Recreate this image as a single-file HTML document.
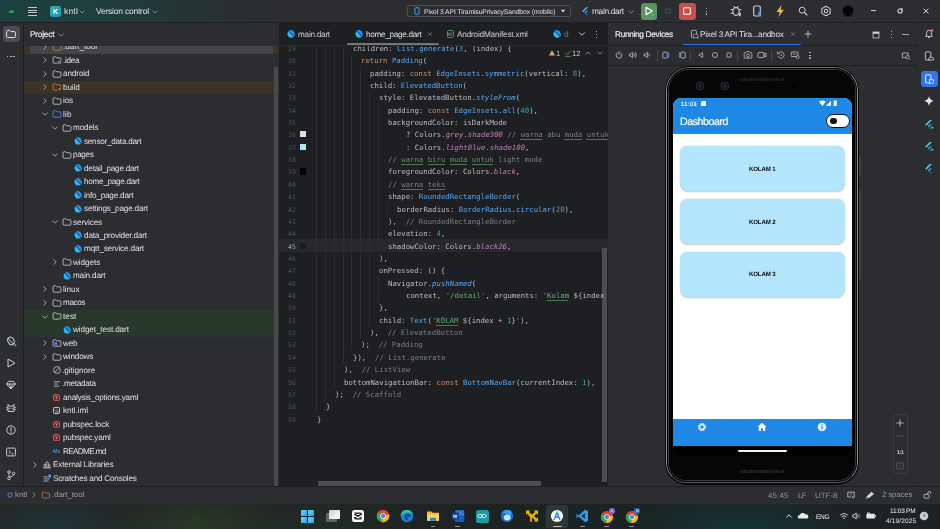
<!DOCTYPE html><html><head><meta charset="utf-8"><title>kntl</title><style>
*{box-sizing:border-box;margin:0;padding:0}
html,body{width:940px;height:529px;overflow:hidden;background:#2b2d30}
body{position:relative;font-family:"Liberation Sans",sans-serif;color:#dfe1e5;font-size:8px}
.abs{position:absolute}
svg{position:absolute;overflow:visible}
.t{position:absolute;white-space:nowrap;line-height:1}
#title{left:0;top:0;width:940px;height:23px;background:linear-gradient(90deg,#1c403e 0px,#1d3f3d 90px,#213a3a 140px,#263334 190px,#2a2f31 235px,#2b2d30 265px)}
#lstrip{left:0;top:22.4px;width:23.6px;height:464px;background:#2b2d30;border-right:1px solid #1e1f22}
#proj{left:23.6px;top:22.4px;width:255.4px;height:464px;background:#2b2d30;overflow:hidden}
#editor{left:279px;top:22.4px;width:329px;height:464px;background:#1e1f22;overflow:hidden}
#rd{left:608px;top:22.4px;width:309.4px;height:464px;background:#2b2d30;overflow:hidden}
#rstrip{left:917.2px;top:22.4px;width:22.8px;height:464px;background:#2b2d30;border-left:1px solid #25272a}
#status{left:0;top:486.2px;width:940px;height:16.6px;background:#2b2d30;border-top:1px solid #1e1f22}
#task{left:0;top:502.6px;width:940px;height:26.4px;background:radial-gradient(ellipse 75px 30px at 55px 24px,rgba(28,60,66,.6),transparent),radial-gradient(ellipse 90px 34px at 200px 24px,rgba(44,68,36,.65),transparent),radial-gradient(ellipse 70px 30px at 330px 26px,rgba(30,52,36,.5),transparent),radial-gradient(ellipse 110px 36px at 740px 26px,rgba(14,64,64,.6),transparent),linear-gradient(90deg,#242827 0,#222726 30%,#1d2322 50%,#1b2325 68%,#1e2226 100%)}
.row{position:absolute;left:0;width:256px;height:13.46px}
.code{position:absolute;left:0;white-space:pre;font-family:"Liberation Mono",monospace;font-size:7.33px;line-height:12.36px;height:12.36px;color:#bcbec4}
.ln{position:absolute;width:30px;text-align:right;font-family:"Liberation Mono",monospace;font-size:7.33px;line-height:12.36px;color:#4b5059;left:-13px}
.cd{font-family:"DejaVu Sans Mono","Liberation Mono",monospace;font-size:7.3px;fill:#bcbec4;white-space:pre}.lnn{font-family:"DejaVu Sans Mono","Liberation Mono",monospace;font-size:6.5px}
.k{fill:#cf8e6d}.c{fill:#56a8f5}.n{fill:#2aacb8}.s{fill:#6aab73}.m{fill:#7a7e85}.p{fill:#c77dbb;font-style:italic}.f{fill:#56a8f5;font-style:italic}

</style></head><body><div id="root" style="position:absolute;left:0;top:0;width:940px;height:529px;will-change:transform;overflow:hidden">
<div id="title" class="abs"></div>
<div class="abs" style="left:8.8px;top:10.4px;width:5px;height:2.4px;background:#2a9d4f;border-radius:2.5px 2.5px 0 0"></div>
<div class="abs" style="left:28.2px;top:7.00px;width:9.2px;height:1px;background:#c3c6cc"></div>
<div class="abs" style="left:28.2px;top:9.55px;width:9.2px;height:1px;background:#c3c6cc"></div>
<div class="abs" style="left:28.2px;top:12.10px;width:9.2px;height:1px;background:#c3c6cc"></div>
<div class="abs" style="left:28.2px;top:14.65px;width:9.2px;height:1px;background:#c3c6cc"></div>
<div class="abs" style="left:49.6px;top:5.6px;width:11px;height:11.2px;border-radius:2.4px;background:linear-gradient(135deg,#2fb5a5,#2a8dc6)"></div>
<svg style="left:52.70px;top:13.83px" width="1" height="1"><text transform="rotate(0.03)" font-size="7.2" font-weight="bold" fill="#fff" style="">K</text></svg>
<svg style="left:64.20px;top:14.45px" width="1" height="1"><text transform="rotate(0.03)" font-size="8.4" fill="#dfe1e5" style="letter-spacing:0.243px;">kntl</text></svg>
<svg style="left:82.30px;top:11.90px" width="1" height="1"><path d="M-2.2 -1.1 L0 1.1 L2.2 -1.1" transform="scale(1.0)" fill="none" stroke="#9da0a8" stroke-width="0.8" stroke-linecap="round" stroke-linejoin="round"/></svg>
<svg style="left:95.50px;top:14.45px" width="1" height="1"><text transform="rotate(0.03)" font-size="8.4" fill="#dfe1e5" style="letter-spacing:-0.169px;">Version control</text></svg>
<svg style="left:154.80px;top:11.90px" width="1" height="1"><path d="M-2.2 -1.1 L0 1.1 L2.2 -1.1" transform="scale(1.0)" fill="none" stroke="#9da0a8" stroke-width="0.8" stroke-linecap="round" stroke-linejoin="round"/></svg>
<div class="abs" style="left:407.4px;top:4.6px;width:163.4px;height:12.8px;border:1px solid #4e5157;border-radius:2.4px"></div>
<svg style="left:416.60px;top:11.00px" width="1" height="1"><rect x="-2.1" y="-3.3" width="4.2" height="6.6" rx="0.9" fill="none" stroke="#3ea6e8" stroke-width="1"/></svg>
<svg style="left:423.60px;top:13.62px" width="1" height="1"><text transform="rotate(0.03)" font-size="6.8" fill="#dfe1e5" style="letter-spacing:-0.106px;">Pixel 3 API TiramisuPrivacySandbox (mobile)</text></svg>
<svg style="left:563.20px;top:11.40px" width="1" height="1"><path d="M-2.3 -1.2 L2.3 -1.2 L0 1.5Z" fill="#ced0d6"/></svg>
<svg style="left:584.60px;top:11.00px" width="1" height="1"><path d="M-2.8 0.2 L1.2 -3.8 L3.2 -3.8 L-1.8 1.2 Z" fill="#54c5f8"/><path d="M-0.6 1.8 L1.2 0 L3.2 0 L0.4 2.8 L3.2 4 L1.2 4 Z" fill="#29a3e8"/></svg>
<svg style="left:592.20px;top:14.35px" width="1" height="1"><text transform="rotate(0.03)" font-size="8.4" fill="#dfe1e5" style="letter-spacing:-0.352px;">main.dart</text></svg>
<svg style="left:631.20px;top:11.90px" width="1" height="1"><path d="M-2.2 -1.1 L0 1.1 L2.2 -1.1" transform="scale(1.0)" fill="none" stroke="#9da0a8" stroke-width="0.8" stroke-linecap="round" stroke-linejoin="round"/></svg>
<div class="abs" style="left:640.8px;top:3.2px;width:16.6px;height:16.4px;border-radius:3.2px;background:#57965c"></div>
<svg style="left:649.00px;top:11.30px" width="1" height="1"><g transform="scale(1.12)"><path d="M-2.6 -3.4 L3 0 L-2.6 3.4 Z" fill="none" stroke="#fff" stroke-width="1" stroke-linejoin="round"/><circle cx="3.2" cy="3.2" r="1" fill="#3ddc5f"/></g></svg>
<svg style="left:668.40px;top:11.40px" width="1" height="1"><ellipse rx="2.2" ry="2.8" fill="none" stroke="#4a4d52" stroke-width="0.9"/><path d="M-3.6 -1 H-2.2 M2.2 -1 H3.6 M-3.6 1.4 H-2.2 M2.2 1.4 H3.6 M-1.4 -3.6 L-0.8 -2.6 M1.4 -3.6 L0.8 -2.6" stroke="#4a4d52" stroke-width="0.8"/></svg>
<div class="abs" style="left:679px;top:3.2px;width:16.8px;height:16.4px;border-radius:3.2px;background:#c94f4f"></div>
<svg style="left:687.40px;top:11.40px" width="1" height="1"><rect x="-3.3" y="-3.3" width="6.6" height="6.6" rx="0.9" fill="none" stroke="#fff" stroke-width="1.05"/></svg>
<div class="abs" style="left:705.7px;top:7.60px;width:1.3px;height:1.3px;background:#ced0d6;border-radius:1px"></div>
<div class="abs" style="left:705.7px;top:10.50px;width:1.3px;height:1.3px;background:#ced0d6;border-radius:1px"></div>
<div class="abs" style="left:705.7px;top:13.40px;width:1.3px;height:1.3px;background:#ced0d6;border-radius:1px"></div>
<svg style="left:736.20px;top:11.20px" width="1" height="1"><g transform="scale(1.28)"><ellipse cy="0.4" rx="2.5" ry="3" fill="none" stroke="#ced0d6" stroke-width="0.95"/><path d="M-4.2 -1.2 H-2.5 M2.5 -1.2 H4.2 M-4.2 1.8 H-2.5 M2.5 1.8 H4 M-1.8 -3.8 L-1 -2.6 M1.8 -3.8 L1 -2.6" stroke="#ced0d6" stroke-width="0.85"/><path d="M1.6 1.6 L4.2 3 L2.6 4.4Z" fill="#ced0d6"/></g></svg>
<svg style="left:757.20px;top:11.20px" width="1" height="1"><g transform="scale(1.22)"><rect x="-2.7" y="-4.1" width="5.4" height="8.2" rx="1" fill="none" stroke="#ced0d6" stroke-width="0.95"/><path d="M3.4 0 L1.2 2.2 L3.4 4.4 M3.4 -0.2 L1.6 1.6" fill="none" stroke="#3ea6e8" stroke-width="1.1"/></g></svg>
<svg style="left:780.40px;top:11.20px" width="1" height="1"><g transform="scale(1.35)"><path d="M1.2 -4.6 L-2.6 0.8 L-0.2 0.8 L-1.2 4.6 L2.8 -1 L0.4 -1 Z" fill="#f2c037"/></g></svg>
<svg style="left:803.00px;top:11.00px" width="1" height="1"><circle cx="-0.8" cy="-0.8" r="3" fill="none" stroke="#ced0d6" stroke-width="1"/><path d="M1.4 1.4 L4 4" stroke="#ced0d6" stroke-width="1.1" stroke-linecap="round"/></svg>
<svg style="left:825.60px;top:11.20px" width="1" height="1"><g transform="scale(1.12)"><path d="M0 -4.3 L3.7 -2.15 L3.7 2.15 L0 4.3 L-3.7 2.15 L-3.7 -2.15 Z" fill="none" stroke="#ced0d6" stroke-width="0.95" stroke-linejoin="round"/><circle r="1.5" fill="none" stroke="#ced0d6" stroke-width="0.9"/></g></svg>
<svg style="left:848.40px;top:11.20px" width="1" height="1"><circle r="5.5" fill="#050507"/></svg>
<div class="abs" style="left:871.4px;top:10.4px;width:5px;height:1px;background:#ced0d6"></div>
<svg style="left:899.60px;top:10.80px" width="1" height="1"><circle r="2" fill="none" stroke="#ced0d6" stroke-width="1.1"/><path d="M-0.6 -2.6 H2.4 V0.4" fill="none" stroke="#ced0d6" stroke-width="0.7"/></svg>
<svg style="left:926.00px;top:10.80px" width="1" height="1"><path d="M-2.4 -2.4 L2.4 2.4 M2.4 -2.4 L-2.4 2.4" stroke="#ced0d6" stroke-width="1"/></svg>
<div id="lstrip" class="abs"></div>
<div class="abs" style="left:3px;top:25.6px;width:16.8px;height:16.8px;border-radius:3.4px;background:#4a4c51"></div>
<svg style="left:11.40px;top:34.00px" width="1" height="1"><path d="M-4.4 -2.4 Q-4.4 -3.6 -3.2 -3.6 L-1.4 -3.6 L-0.2 -2.4 L3.2 -2.4 Q4.4 -2.4 4.4 -1.2 L4.4 2.4 Q4.4 3.6 3.2 3.6 L-3.2 3.6 Q-4.4 3.6 -4.4 2.4 Z" fill="none" stroke="#e3e5e9" stroke-width="1"/></svg>
<div class="abs" style="left:6.60px;top:55.6px;width:1.8px;height:1.8px;background:#ced0d6;border-radius:1px"></div>
<div class="abs" style="left:10.00px;top:55.6px;width:1.8px;height:1.8px;background:#ced0d6;border-radius:1px"></div>
<div class="abs" style="left:13.40px;top:55.6px;width:1.8px;height:1.8px;background:#ced0d6;border-radius:1px"></div>
<svg style="left:11.20px;top:341.00px" width="1" height="1"><ellipse rx="3" ry="4" transform="rotate(-28)" fill="none" stroke="#ced0d6" stroke-width="1"/><path d="M-3 -2.6 L2.6 3.4" stroke="#ced0d6" stroke-width="1"/><circle cx="4.4" cy="4.2" r="1" fill="#3ddc5f"/></svg>
<svg style="left:11.40px;top:363.00px" width="1" height="1"><path d="M-3 -4 L3.8 0 L-3 4 Z" fill="none" stroke="#ced0d6" stroke-width="1" stroke-linejoin="round"/></svg>
<svg style="left:11.40px;top:385.20px" width="1" height="1"><path d="M-4.6 -1 L-2.4 -3.6 L2.4 -3.6 L4.6 -1 L0 4 Z M-4.6 -1 H4.6 M-1.6 -1 L0 3.6 L1.6 -1" fill="none" stroke="#ced0d6" stroke-width="0.95" stroke-linejoin="round"/></svg>
<svg style="left:11.40px;top:407.80px" width="1" height="1"><path d="M-3 -3.6 L-1.6 -1.8 H1.6 L3 -3.6 V3.4 H-3 Z" fill="none" stroke="#ced0d6" stroke-width="1" stroke-linejoin="round"/><path d="M-5 -0.4 H-3 M-5 1.4 H-3 M3 -0.4 H5 M3 1.4 H5" stroke="#ced0d6" stroke-width="0.7"/><circle cx="-1.2" cy="0.4" r="0.6" fill="#ced0d6"/><circle cx="1.2" cy="0.4" r="0.6" fill="#ced0d6"/></svg>
<svg style="left:11.40px;top:430.00px" width="1" height="1"><circle r="4.2" fill="none" stroke="#ced0d6" stroke-width="1"/><path d="M0 -2.2 V0.6" stroke="#ced0d6" stroke-width="1.1" stroke-linecap="round"/><circle cy="2.2" r="0.65" fill="#ced0d6"/></svg>
<svg style="left:11.40px;top:452.40px" width="1" height="1"><rect x="-4.4" y="-3.9" width="8.8" height="7.8" rx="1.1" fill="none" stroke="#ced0d6" stroke-width="1"/><path d="M-2.2 -1.6 L-0.4 0 L-2.2 1.6 M0.4 1.8 H2.4" fill="none" stroke="#ced0d6" stroke-width="0.9"/></svg>
<svg style="left:11.40px;top:474.60px" width="1" height="1"><circle cx="-2" cy="-3" r="1.3" fill="none" stroke="#ced0d6" stroke-width="0.9"/><circle cx="-2" cy="3.4" r="1.3" fill="none" stroke="#ced0d6" stroke-width="0.9"/><circle cx="2.6" cy="-1.6" r="1.3" fill="none" stroke="#ced0d6" stroke-width="0.9"/><path d="M-2 -1.7 V2.1 M2.6 -0.3 Q2.4 1.6 -1.6 2.2" fill="none" stroke="#ced0d6" stroke-width="0.9"/></svg>
<div id="proj" class="abs">
<div class="abs" style="left:0;top:23.30px;width:256px;height:7.86px;background:#3d3223"></div>
<div class="abs" style="left:6.6px;top:23.30px;width:242.4px;height:7.86px;background:#43454a"></div>
<div class="abs" style="left:0;top:58.11px;width:256px;height:13.475px;background:#3d3223"></div>
<div class="abs" style="left:0;top:287.19px;width:256px;height:13.475px;background:#29382b"></div>
<div class="abs" style="left:0;top:300.66px;width:256px;height:13.475px;background:#29382b"></div>
</div>
<div class="abs" style="left:0;top:45.6px;width:273px;height:441px;overflow:hidden"><div class="abs" style="left:0;top:-45.6px">
<svg style="left:44.80px;top:46.82px" width="1" height="1"><path d="M-1.1 -2.2 L1.1 0 L-1.1 2.2" transform="scale(1.08)" fill="none" stroke="#a8abb2" stroke-width="0.85" stroke-linecap="round" stroke-linejoin="round"/></svg>
<svg style="left:57.20px;top:46.82px" width="1" height="1"><g transform="scale(1.07)"><path d="M-3.7 -2 Q-3.7 -3 -2.7 -3 L-1.2 -3 L-0.2 -2 L2.7 -2 Q3.7 -2 3.7 -1 L3.7 2 Q3.7 3 2.7 3 L-2.7 3 Q-3.7 3 -3.7 2 Z" fill="none" stroke="#c77d55" stroke-width="0.8"/></g></svg>
<svg style="left:62.60px;top:49.32px" width="1" height="1"><text transform="rotate(0.03)" font-size="8.2" fill="#dfe1e5" style="">.dart_tool</text></svg>
<svg style="left:44.80px;top:60.30px" width="1" height="1"><path d="M-1.1 -2.2 L1.1 0 L-1.1 2.2" transform="scale(1.08)" fill="none" stroke="#a8abb2" stroke-width="0.85" stroke-linecap="round" stroke-linejoin="round"/></svg>
<svg style="left:57.20px;top:60.30px" width="1" height="1"><g transform="scale(1.07)"><path d="M-3.7 -2 Q-3.7 -3 -2.7 -3 L-1.2 -3 L-0.2 -2 L2.7 -2 Q3.7 -2 3.7 -1 L3.7 2 Q3.7 3 2.7 3 L-2.7 3 Q-3.7 3 -3.7 2 Z" fill="none" stroke="#c6c8ce" stroke-width="0.8"/></g></svg>
<svg style="left:57.20px;top:60.30px" width="1" height="1"><rect x="0.6" y="0.2" width="4" height="3.6" fill="#2b2d30"/><path d="M1.4 1 H3.6 V3.2 H1.4Z" fill="none" stroke="#c6c8ce" stroke-width="0.6"/></svg>
<svg style="left:62.60px;top:62.80px" width="1" height="1"><text transform="rotate(0.03)" font-size="8.2" fill="#dfe1e5" style="letter-spacing:-0.295px;">.idea</text></svg>
<svg style="left:44.80px;top:73.77px" width="1" height="1"><path d="M-1.1 -2.2 L1.1 0 L-1.1 2.2" transform="scale(1.08)" fill="none" stroke="#a8abb2" stroke-width="0.85" stroke-linecap="round" stroke-linejoin="round"/></svg>
<svg style="left:57.20px;top:73.77px" width="1" height="1"><g transform="scale(1.07)"><path d="M-3.7 -2 Q-3.7 -3 -2.7 -3 L-1.2 -3 L-0.2 -2 L2.7 -2 Q3.7 -2 3.7 -1 L3.7 2 Q3.7 3 2.7 3 L-2.7 3 Q-3.7 3 -3.7 2 Z" fill="none" stroke="#c6c8ce" stroke-width="0.8"/></g></svg>
<svg style="left:62.60px;top:76.27px" width="1" height="1"><text transform="rotate(0.03)" font-size="8.2" fill="#dfe1e5" style="letter-spacing:-0.126px;">android</text></svg>
<svg style="left:44.80px;top:87.25px" width="1" height="1"><path d="M-1.1 -2.2 L1.1 0 L-1.1 2.2" transform="scale(1.08)" fill="none" stroke="#a8abb2" stroke-width="0.85" stroke-linecap="round" stroke-linejoin="round"/></svg>
<svg style="left:57.20px;top:87.25px" width="1" height="1"><g transform="scale(1.07)"><path d="M-3.7 -2 Q-3.7 -3 -2.7 -3 L-1.2 -3 L-0.2 -2 L2.7 -2 Q3.7 -2 3.7 -1 L3.7 2 Q3.7 3 2.7 3 L-2.7 3 Q-3.7 3 -3.7 2 Z" fill="none" stroke="#c77d55" stroke-width="0.8"/></g></svg>
<svg style="left:57.20px;top:87.25px" width="1" height="1"><rect x="0.6" y="0.2" width="4" height="3.6" fill="#3d3223"/><circle cx="2.6" cy="2" r="1.1" fill="#c77d55"/></svg>
<svg style="left:62.60px;top:89.75px" width="1" height="1"><text transform="rotate(0.03)" font-size="8.2" fill="#dfe1e5" style="letter-spacing:-0.131px;">build</text></svg>
<svg style="left:44.80px;top:100.72px" width="1" height="1"><path d="M-1.1 -2.2 L1.1 0 L-1.1 2.2" transform="scale(1.08)" fill="none" stroke="#a8abb2" stroke-width="0.85" stroke-linecap="round" stroke-linejoin="round"/></svg>
<svg style="left:57.20px;top:100.72px" width="1" height="1"><g transform="scale(1.07)"><path d="M-3.7 -2 Q-3.7 -3 -2.7 -3 L-1.2 -3 L-0.2 -2 L2.7 -2 Q3.7 -2 3.7 -1 L3.7 2 Q3.7 3 2.7 3 L-2.7 3 Q-3.7 3 -3.7 2 Z" fill="none" stroke="#c6c8ce" stroke-width="0.8"/></g></svg>
<svg style="left:62.60px;top:103.22px" width="1" height="1"><text transform="rotate(0.03)" font-size="8.2" fill="#dfe1e5" style="letter-spacing:-0.141px;">ios</text></svg>
<svg style="left:44.80px;top:114.40px" width="1" height="1"><path d="M-2.2 -1.1 L0 1.1 L2.2 -1.1" transform="scale(1.08)" fill="none" stroke="#a8abb2" stroke-width="0.85" stroke-linecap="round" stroke-linejoin="round"/></svg>
<svg style="left:57.20px;top:114.20px" width="1" height="1"><g transform="scale(1.07)"><path d="M-3.7 -2 Q-3.7 -3 -2.7 -3 L-1.2 -3 L-0.2 -2 L2.7 -2 Q3.7 -2 3.7 -1 L3.7 2 Q3.7 3 2.7 3 L-2.7 3 Q-3.7 3 -3.7 2 Z" fill="none" stroke="#548af7" stroke-width="0.8"/></g></svg>
<svg style="left:62.60px;top:116.70px" width="1" height="1"><text transform="rotate(0.03)" font-size="8.2" fill="#dfe1e5" style="letter-spacing:0.198px;">lib</text></svg>
<svg style="left:54.60px;top:127.88px" width="1" height="1"><path d="M-2.2 -1.1 L0 1.1 L2.2 -1.1" transform="scale(1.08)" fill="none" stroke="#a8abb2" stroke-width="0.85" stroke-linecap="round" stroke-linejoin="round"/></svg>
<svg style="left:67.00px;top:127.67px" width="1" height="1"><g transform="scale(1.07)"><path d="M-3.7 -2 Q-3.7 -3 -2.7 -3 L-1.2 -3 L-0.2 -2 L2.7 -2 Q3.7 -2 3.7 -1 L3.7 2 Q3.7 3 2.7 3 L-2.7 3 Q-3.7 3 -3.7 2 Z" fill="none" stroke="#c6c8ce" stroke-width="0.8"/></g></svg>
<svg style="left:73.00px;top:130.17px" width="1" height="1"><text transform="rotate(0.03)" font-size="8.2" fill="#dfe1e5" style="letter-spacing:-0.167px;">models</text></svg>
<svg style="left:77.90px;top:141.15px" width="1" height="1"><g transform="scale(0.973)"><path d="M-1.2 -3.7 Q0.8 -4 2.4 -2.6 Q3.9 -1 3.6 1.2 Q3.2 3 1.2 3.6 Q-0.8 4 -2.4 2.8 Q-3.9 1.2 -3.5 -1 Q-3 -3 -1.2 -3.7Z" fill="#2db8f6"/><path d="M-1.6 -3.5 Q0.8 -4.1 2.5 -2.6 Q3.9 -1 3.6 1.2 Q3.5 1.8 3.2 2.3 Z" fill="#2b8fe1"/><path d="M-2 -2.9 L2.5 1.9" stroke="#0f4f9f" stroke-width="1.15" stroke-linecap="round"/></g></svg>
<svg style="left:84.30px;top:143.65px" width="1" height="1"><text transform="rotate(0.03)" font-size="8.2" fill="#dfe1e5" style="letter-spacing:-0.263px;">sensor_data.dart</text></svg>
<svg style="left:54.60px;top:154.82px" width="1" height="1"><path d="M-2.2 -1.1 L0 1.1 L2.2 -1.1" transform="scale(1.08)" fill="none" stroke="#a8abb2" stroke-width="0.85" stroke-linecap="round" stroke-linejoin="round"/></svg>
<svg style="left:67.00px;top:154.62px" width="1" height="1"><g transform="scale(1.07)"><path d="M-3.7 -2 Q-3.7 -3 -2.7 -3 L-1.2 -3 L-0.2 -2 L2.7 -2 Q3.7 -2 3.7 -1 L3.7 2 Q3.7 3 2.7 3 L-2.7 3 Q-3.7 3 -3.7 2 Z" fill="none" stroke="#c6c8ce" stroke-width="0.8"/></g></svg>
<svg style="left:73.00px;top:157.12px" width="1" height="1"><text transform="rotate(0.03)" font-size="8.2" fill="#dfe1e5" style="letter-spacing:-0.386px;">pages</text></svg>
<svg style="left:77.90px;top:168.10px" width="1" height="1"><g transform="scale(0.973)"><path d="M-1.2 -3.7 Q0.8 -4 2.4 -2.6 Q3.9 -1 3.6 1.2 Q3.2 3 1.2 3.6 Q-0.8 4 -2.4 2.8 Q-3.9 1.2 -3.5 -1 Q-3 -3 -1.2 -3.7Z" fill="#2db8f6"/><path d="M-1.6 -3.5 Q0.8 -4.1 2.5 -2.6 Q3.9 -1 3.6 1.2 Q3.5 1.8 3.2 2.3 Z" fill="#2b8fe1"/><path d="M-2 -2.9 L2.5 1.9" stroke="#0f4f9f" stroke-width="1.15" stroke-linecap="round"/></g></svg>
<svg style="left:84.30px;top:170.60px" width="1" height="1"><text transform="rotate(0.03)" font-size="8.2" fill="#dfe1e5" style="letter-spacing:-0.241px;">detail_page.dart</text></svg>
<svg style="left:77.90px;top:181.57px" width="1" height="1"><g transform="scale(0.973)"><path d="M-1.2 -3.7 Q0.8 -4 2.4 -2.6 Q3.9 -1 3.6 1.2 Q3.2 3 1.2 3.6 Q-0.8 4 -2.4 2.8 Q-3.9 1.2 -3.5 -1 Q-3 -3 -1.2 -3.7Z" fill="#2db8f6"/><path d="M-1.6 -3.5 Q0.8 -4.1 2.5 -2.6 Q3.9 -1 3.6 1.2 Q3.5 1.8 3.2 2.3 Z" fill="#2b8fe1"/><path d="M-2 -2.9 L2.5 1.9" stroke="#0f4f9f" stroke-width="1.15" stroke-linecap="round"/></g></svg>
<svg style="left:84.30px;top:184.07px" width="1" height="1"><text transform="rotate(0.03)" font-size="8.2" fill="#dfe1e5" style="letter-spacing:-0.302px;">home_page.dart</text></svg>
<svg style="left:77.90px;top:195.05px" width="1" height="1"><g transform="scale(0.973)"><path d="M-1.2 -3.7 Q0.8 -4 2.4 -2.6 Q3.9 -1 3.6 1.2 Q3.2 3 1.2 3.6 Q-0.8 4 -2.4 2.8 Q-3.9 1.2 -3.5 -1 Q-3 -3 -1.2 -3.7Z" fill="#2db8f6"/><path d="M-1.6 -3.5 Q0.8 -4.1 2.5 -2.6 Q3.9 -1 3.6 1.2 Q3.5 1.8 3.2 2.3 Z" fill="#2b8fe1"/><path d="M-2 -2.9 L2.5 1.9" stroke="#0f4f9f" stroke-width="1.15" stroke-linecap="round"/></g></svg>
<svg style="left:84.30px;top:197.55px" width="1" height="1"><text transform="rotate(0.03)" font-size="8.2" fill="#dfe1e5" style="letter-spacing:-0.218px;">info_page.dart</text></svg>
<svg style="left:77.90px;top:208.52px" width="1" height="1"><g transform="scale(0.973)"><path d="M-1.2 -3.7 Q0.8 -4 2.4 -2.6 Q3.9 -1 3.6 1.2 Q3.2 3 1.2 3.6 Q-0.8 4 -2.4 2.8 Q-3.9 1.2 -3.5 -1 Q-3 -3 -1.2 -3.7Z" fill="#2db8f6"/><path d="M-1.6 -3.5 Q0.8 -4.1 2.5 -2.6 Q3.9 -1 3.6 1.2 Q3.5 1.8 3.2 2.3 Z" fill="#2b8fe1"/><path d="M-2 -2.9 L2.5 1.9" stroke="#0f4f9f" stroke-width="1.15" stroke-linecap="round"/></g></svg>
<svg style="left:84.30px;top:211.02px" width="1" height="1"><text transform="rotate(0.03)" font-size="8.2" fill="#dfe1e5" style="letter-spacing:-0.192px;">settings_page.dart</text></svg>
<svg style="left:54.60px;top:222.20px" width="1" height="1"><path d="M-2.2 -1.1 L0 1.1 L2.2 -1.1" transform="scale(1.08)" fill="none" stroke="#a8abb2" stroke-width="0.85" stroke-linecap="round" stroke-linejoin="round"/></svg>
<svg style="left:67.00px;top:222.00px" width="1" height="1"><g transform="scale(1.07)"><path d="M-3.7 -2 Q-3.7 -3 -2.7 -3 L-1.2 -3 L-0.2 -2 L2.7 -2 Q3.7 -2 3.7 -1 L3.7 2 Q3.7 3 2.7 3 L-2.7 3 Q-3.7 3 -3.7 2 Z" fill="none" stroke="#c6c8ce" stroke-width="0.8"/></g></svg>
<svg style="left:73.00px;top:224.50px" width="1" height="1"><text transform="rotate(0.03)" font-size="8.2" fill="#dfe1e5" style="letter-spacing:-0.125px;">services</text></svg>
<svg style="left:77.90px;top:235.47px" width="1" height="1"><g transform="scale(0.973)"><path d="M-1.2 -3.7 Q0.8 -4 2.4 -2.6 Q3.9 -1 3.6 1.2 Q3.2 3 1.2 3.6 Q-0.8 4 -2.4 2.8 Q-3.9 1.2 -3.5 -1 Q-3 -3 -1.2 -3.7Z" fill="#2db8f6"/><path d="M-1.6 -3.5 Q0.8 -4.1 2.5 -2.6 Q3.9 -1 3.6 1.2 Q3.5 1.8 3.2 2.3 Z" fill="#2b8fe1"/><path d="M-2 -2.9 L2.5 1.9" stroke="#0f4f9f" stroke-width="1.15" stroke-linecap="round"/></g></svg>
<svg style="left:84.30px;top:237.97px" width="1" height="1"><text transform="rotate(0.03)" font-size="8.2" fill="#dfe1e5" style="letter-spacing:-0.171px;">data_provider.dart</text></svg>
<svg style="left:77.90px;top:248.95px" width="1" height="1"><g transform="scale(0.973)"><path d="M-1.2 -3.7 Q0.8 -4 2.4 -2.6 Q3.9 -1 3.6 1.2 Q3.2 3 1.2 3.6 Q-0.8 4 -2.4 2.8 Q-3.9 1.2 -3.5 -1 Q-3 -3 -1.2 -3.7Z" fill="#2db8f6"/><path d="M-1.6 -3.5 Q0.8 -4.1 2.5 -2.6 Q3.9 -1 3.6 1.2 Q3.5 1.8 3.2 2.3 Z" fill="#2b8fe1"/><path d="M-2 -2.9 L2.5 1.9" stroke="#0f4f9f" stroke-width="1.15" stroke-linecap="round"/></g></svg>
<svg style="left:84.30px;top:251.45px" width="1" height="1"><text transform="rotate(0.03)" font-size="8.2" fill="#dfe1e5" style="letter-spacing:-0.168px;">mqtt_service.dart</text></svg>
<svg style="left:54.60px;top:262.43px" width="1" height="1"><path d="M-1.1 -2.2 L1.1 0 L-1.1 2.2" transform="scale(1.08)" fill="none" stroke="#a8abb2" stroke-width="0.85" stroke-linecap="round" stroke-linejoin="round"/></svg>
<svg style="left:67.00px;top:262.43px" width="1" height="1"><g transform="scale(1.07)"><path d="M-3.7 -2 Q-3.7 -3 -2.7 -3 L-1.2 -3 L-0.2 -2 L2.7 -2 Q3.7 -2 3.7 -1 L3.7 2 Q3.7 3 2.7 3 L-2.7 3 Q-3.7 3 -3.7 2 Z" fill="none" stroke="#c6c8ce" stroke-width="0.8"/></g></svg>
<svg style="left:73.00px;top:264.92px" width="1" height="1"><text transform="rotate(0.03)" font-size="8.2" fill="#dfe1e5" style="letter-spacing:-0.067px;">widgets</text></svg>
<svg style="left:66.90px;top:275.90px" width="1" height="1"><g transform="scale(0.973)"><path d="M-1.2 -3.7 Q0.8 -4 2.4 -2.6 Q3.9 -1 3.6 1.2 Q3.2 3 1.2 3.6 Q-0.8 4 -2.4 2.8 Q-3.9 1.2 -3.5 -1 Q-3 -3 -1.2 -3.7Z" fill="#2db8f6"/><path d="M-1.6 -3.5 Q0.8 -4.1 2.5 -2.6 Q3.9 -1 3.6 1.2 Q3.5 1.8 3.2 2.3 Z" fill="#2b8fe1"/><path d="M-2 -2.9 L2.5 1.9" stroke="#0f4f9f" stroke-width="1.15" stroke-linecap="round"/></g></svg>
<svg style="left:73.30px;top:278.40px" width="1" height="1"><text transform="rotate(0.03)" font-size="8.2" fill="#dfe1e5" style="letter-spacing:-0.198px;">main.dart</text></svg>
<svg style="left:44.80px;top:289.38px" width="1" height="1"><path d="M-1.1 -2.2 L1.1 0 L-1.1 2.2" transform="scale(1.08)" fill="none" stroke="#a8abb2" stroke-width="0.85" stroke-linecap="round" stroke-linejoin="round"/></svg>
<svg style="left:57.20px;top:289.38px" width="1" height="1"><g transform="scale(1.07)"><path d="M-3.7 -2 Q-3.7 -3 -2.7 -3 L-1.2 -3 L-0.2 -2 L2.7 -2 Q3.7 -2 3.7 -1 L3.7 2 Q3.7 3 2.7 3 L-2.7 3 Q-3.7 3 -3.7 2 Z" fill="none" stroke="#c6c8ce" stroke-width="0.8"/></g></svg>
<svg style="left:62.60px;top:291.87px" width="1" height="1"><text transform="rotate(0.03)" font-size="8.2" fill="#dfe1e5" style="letter-spacing:-0.066px;">linux</text></svg>
<svg style="left:44.80px;top:302.85px" width="1" height="1"><path d="M-1.1 -2.2 L1.1 0 L-1.1 2.2" transform="scale(1.08)" fill="none" stroke="#a8abb2" stroke-width="0.85" stroke-linecap="round" stroke-linejoin="round"/></svg>
<svg style="left:57.20px;top:302.85px" width="1" height="1"><g transform="scale(1.07)"><path d="M-3.7 -2 Q-3.7 -3 -2.7 -3 L-1.2 -3 L-0.2 -2 L2.7 -2 Q3.7 -2 3.7 -1 L3.7 2 Q3.7 3 2.7 3 L-2.7 3 Q-3.7 3 -3.7 2 Z" fill="none" stroke="#c6c8ce" stroke-width="0.8"/></g></svg>
<svg style="left:62.60px;top:305.35px" width="1" height="1"><text transform="rotate(0.03)" font-size="8.2" fill="#dfe1e5" style="letter-spacing:-0.438px;">macos</text></svg>
<svg style="left:44.80px;top:316.52px" width="1" height="1"><path d="M-2.2 -1.1 L0 1.1 L2.2 -1.1" transform="scale(1.08)" fill="none" stroke="#a8abb2" stroke-width="0.85" stroke-linecap="round" stroke-linejoin="round"/></svg>
<svg style="left:57.20px;top:316.32px" width="1" height="1"><g transform="scale(1.07)"><path d="M-3.7 -2 Q-3.7 -3 -2.7 -3 L-1.2 -3 L-0.2 -2 L2.7 -2 Q3.7 -2 3.7 -1 L3.7 2 Q3.7 3 2.7 3 L-2.7 3 Q-3.7 3 -3.7 2 Z" fill="none" stroke="#c6c8ce" stroke-width="0.8"/></g></svg>
<svg style="left:57.20px;top:316.32px" width="1" height="1"><circle cx="2.8" cy="2.4" r="1.5" fill="#29382b"/><circle cx="2.1" cy="2.5" r="0.9" fill="#db5c5c"/><circle cx="3.5" cy="2.5" r="0.9" fill="#57965c"/></svg>
<svg style="left:62.60px;top:318.82px" width="1" height="1"><text transform="rotate(0.03)" font-size="8.2" fill="#dfe1e5" style="letter-spacing:0.061px;">test</text></svg>
<svg style="left:66.90px;top:329.80px" width="1" height="1"><g transform="scale(0.973)"><path d="M-1.2 -3.7 Q0.8 -4 2.4 -2.6 Q3.9 -1 3.6 1.2 Q3.2 3 1.2 3.6 Q-0.8 4 -2.4 2.8 Q-3.9 1.2 -3.5 -1 Q-3 -3 -1.2 -3.7Z" fill="#2db8f6"/><path d="M-1.6 -3.5 Q0.8 -4.1 2.5 -2.6 Q3.9 -1 3.6 1.2 Q3.5 1.8 3.2 2.3 Z" fill="#2b8fe1"/><path d="M-2 -2.9 L2.5 1.9" stroke="#0f4f9f" stroke-width="1.15" stroke-linecap="round"/></g></svg>
<svg style="left:73.30px;top:332.30px" width="1" height="1"><text transform="rotate(0.03)" font-size="8.2" fill="#dfe1e5" style="letter-spacing:-0.126px;">widget_test.dart</text></svg>
<svg style="left:44.80px;top:343.27px" width="1" height="1"><path d="M-1.1 -2.2 L1.1 0 L-1.1 2.2" transform="scale(1.08)" fill="none" stroke="#a8abb2" stroke-width="0.85" stroke-linecap="round" stroke-linejoin="round"/></svg>
<svg style="left:57.20px;top:343.27px" width="1" height="1"><g transform="scale(1.07)"><path d="M-3.7 -2 Q-3.7 -3 -2.7 -3 L-1.2 -3 L-0.2 -2 L2.7 -2 Q3.7 -2 3.7 -1 L3.7 2 Q3.7 3 2.7 3 L-2.7 3 Q-3.7 3 -3.7 2 Z" fill="none" stroke="#c6c8ce" stroke-width="0.8"/></g></svg>
<svg style="left:57.20px;top:343.27px" width="1" height="1"><rect x="-2.4" y="-0.8" width="2.6" height="2.6" fill="#548af7"/></svg>
<svg style="left:62.60px;top:345.77px" width="1" height="1"><text transform="rotate(0.03)" font-size="8.2" fill="#dfe1e5" style="letter-spacing:-0.222px;">web</text></svg>
<svg style="left:44.80px;top:356.75px" width="1" height="1"><path d="M-1.1 -2.2 L1.1 0 L-1.1 2.2" transform="scale(1.08)" fill="none" stroke="#a8abb2" stroke-width="0.85" stroke-linecap="round" stroke-linejoin="round"/></svg>
<svg style="left:57.20px;top:356.75px" width="1" height="1"><g transform="scale(1.07)"><path d="M-3.7 -2 Q-3.7 -3 -2.7 -3 L-1.2 -3 L-0.2 -2 L2.7 -2 Q3.7 -2 3.7 -1 L3.7 2 Q3.7 3 2.7 3 L-2.7 3 Q-3.7 3 -3.7 2 Z" fill="none" stroke="#c6c8ce" stroke-width="0.8"/></g></svg>
<svg style="left:62.60px;top:359.25px" width="1" height="1"><text transform="rotate(0.03)" font-size="8.2" fill="#dfe1e5" style="letter-spacing:-0.175px;">windows</text></svg>
<svg style="left:56.80px;top:370.23px" width="1" height="1"><circle r="3.4" fill="none" stroke="#c6c8ce" stroke-width="0.8"/><path d="M-2.3 2.3 L2.3 -2.3" stroke="#c6c8ce" stroke-width="0.8"/></svg>
<svg style="left:62.30px;top:372.72px" width="1" height="1"><text transform="rotate(0.03)" font-size="8.2" fill="#dfe1e5" style="letter-spacing:-0.037px;">.gitignore</text></svg>
<svg style="left:56.80px;top:383.70px" width="1" height="1"><path d="M-3.2 -2.2 H3.2 M-3.2 0 H1 M-3.2 2.2 H2.2" stroke="#c6c8ce" stroke-width="0.8"/></svg>
<svg style="left:62.30px;top:386.20px" width="1" height="1"><text transform="rotate(0.03)" font-size="8.2" fill="#dfe1e5" style="letter-spacing:-0.309px;">.metadata</text></svg>
<div class="abs" style="left:53.4px;top:393.68px;width:6.8px;height:7px;border-radius:1.5px;background:#6e2d30;border:0.7px solid #c75450"></div>
<svg style="left:55.30px;top:398.89px" width="1" height="1"><text transform="rotate(0.03)" font-size="4.6" font-weight="bold" fill="#e39d99" style="">Y</text></svg>
<svg style="left:62.90px;top:399.67px" width="1" height="1"><text transform="rotate(0.03)" font-size="8.2" fill="#dfe1e5" style="letter-spacing:-0.241px;">analysis_options.yaml</text></svg>
<div class="abs" style="left:53.4px;top:407.25px;width:7px;height:6.8px;border-radius:1.4px;border:0.75px solid #c6c8ce;background:#36383c"></div>
<svg style="left:56.90px;top:410.65px" width="1" height="1"><path d="M-1.8 -0.6 H0.2 M-1.8 1 H1.8" stroke="#c6c8ce" stroke-width="0.6"/></svg>
<svg style="left:62.90px;top:413.15px" width="1" height="1"><text transform="rotate(0.03)" font-size="8.2" fill="#dfe1e5" style="letter-spacing:-0.073px;">kntl.iml</text></svg>
<div class="abs" style="left:53.4px;top:420.62px;width:6.8px;height:7px;border-radius:1.5px;background:#6e2d30;border:0.7px solid #c75450"></div>
<svg style="left:55.30px;top:425.84px" width="1" height="1"><text transform="rotate(0.03)" font-size="4.6" font-weight="bold" fill="#e39d99" style="">Y</text></svg>
<svg style="left:62.90px;top:426.62px" width="1" height="1"><text transform="rotate(0.03)" font-size="8.2" fill="#dfe1e5" style="letter-spacing:-0.133px;">pubspec.lock</text></svg>
<div class="abs" style="left:53.4px;top:434.10px;width:6.8px;height:7px;border-radius:1.5px;background:#6e2d30;border:0.7px solid #c75450"></div>
<svg style="left:55.30px;top:439.32px" width="1" height="1"><text transform="rotate(0.03)" font-size="4.6" font-weight="bold" fill="#e39d99" style="">Y</text></svg>
<svg style="left:62.90px;top:440.10px" width="1" height="1"><text transform="rotate(0.03)" font-size="8.2" fill="#dfe1e5" style="letter-spacing:-0.236px;">pubspec.yaml</text></svg>
<svg style="left:52.60px;top:453.15px" width="1" height="1"><text transform="rotate(0.03)" font-size="5.6" font-weight="bold" fill="#548af7" style="">M</text></svg>
<svg style="left:59.00px;top:451.07px" width="1" height="1"><path d="M0 -1.6 V1.6 M-1.1 0.5 L0 1.7 L1.1 0.5" fill="none" stroke="#548af7" stroke-width="0.7"/></svg>
<svg style="left:62.90px;top:453.57px" width="1" height="1"><text transform="rotate(0.03)" font-size="8.2" fill="#dfe1e5" style="letter-spacing:-0.669px;">README.md</text></svg>
<svg style="left:34.80px;top:464.55px" width="1" height="1"><path d="M-1.1 -2.2 L1.1 0 L-1.1 2.2" transform="scale(1.08)" fill="none" stroke="#a8abb2" stroke-width="0.85" stroke-linecap="round" stroke-linejoin="round"/></svg>
<svg style="left:46.60px;top:464.55px" width="1" height="1"><path d="M-4 3 H4 M-3 3 V-0.6 H-1 V3 M-1 3 V-3 H1.2 V3 M1.2 3 V-0.2 H3 V3" fill="none" stroke="#c6c8ce" stroke-width="0.75"/></svg>
<svg style="left:52.90px;top:467.05px" width="1" height="1"><text transform="rotate(0.03)" font-size="8.2" fill="#dfe1e5" style="letter-spacing:-0.189px;">External Libraries</text></svg>
<svg style="left:46.60px;top:478.02px" width="1" height="1"><path d="M-3.4 -1.2 H0.6 M-3.4 0.9 H2.6 M-3.4 3 H1.4" stroke="#c6c8ce" stroke-width="0.8"/><circle cx="2.6" cy="-2" r="1.7" fill="#548af7"/></svg>
<svg style="left:52.90px;top:480.52px" width="1" height="1"><text transform="rotate(0.03)" font-size="8.2" fill="#dfe1e5" style="letter-spacing:-0.233px;">Scratches and Consoles</text></svg>
</div></div>
<svg style="left:30.00px;top:37.25px" width="1" height="1"><text transform="rotate(0.03)" font-size="8.4" fill="#e6e8ec" style="letter-spacing:-0.257px;stroke:#e6e8ec;stroke-width:0.2px;">Project</text></svg>
<svg style="left:60.80px;top:35.00px" width="1" height="1"><path d="M-2.2 -1.1 L0 1.1 L2.2 -1.1" transform="scale(1.0)" fill="none" stroke="#9da0a8" stroke-width="0.8" stroke-linecap="round" stroke-linejoin="round"/></svg>
<div class="abs" style="left:273.6px;top:67px;width:4.6px;height:419px;background:#47494d"></div>
<div id="editor" class="abs">
<div class="abs" style="left:0;top:217.02px;width:330px;height:12.36px;background:#26282e"></div>
<div class="abs" style="left:322.9px;top:225.8px;width:4.8px;height:233.8px;background:#4d4e51"></div>
<div class="abs" style="left:37.1px;top:19.26px;width:0.8px;height:370.80px;background:#2b2d31"></div>
<div class="abs" style="left:45.9px;top:19.26px;width:0.8px;height:358.44px;background:#2b2d31"></div>
<div class="abs" style="left:54.7px;top:19.26px;width:0.8px;height:346.08px;background:#2b2d31"></div>
<div class="abs" style="left:63.6px;top:19.26px;width:0.8px;height:321.36px;background:#2b2d31"></div>
<div class="abs" style="left:72.4px;top:31.62px;width:0.8px;height:296.64px;background:#2b2d31"></div>
<div class="abs" style="left:81.2px;top:43.98px;width:0.8px;height:271.92px;background:#2b2d31"></div>
<div class="abs" style="left:90.0px;top:68.70px;width:0.8px;height:234.84px;background:#2b2d31"></div>
<div class="abs" style="left:98.8px;top:81.06px;width:0.8px;height:148.32px;background:#2b2d31"></div>
<div class="abs" style="left:98.8px;top:254.10px;width:0.8px;height:24.72px;background:#2b2d31"></div>
<div class="abs" style="left:107.7px;top:179.94px;width:0.8px;height:12.36px;background:#2b2d31"></div>
<svg style="left:9.40px;top:28.44px" width="1" height="1"><text transform="rotate(0.03)" class="lnn" fill="#4b5059" style="letter-spacing:0.037px">29</text></svg>
<svg style="left:73.58px;top:28.44px" width="1" height="1"><text transform="rotate(0.03)" class="cd" style="letter-spacing:0.015px">children: <tspan class="c">List</tspan>.<tspan class="c">generate</tspan>(<tspan class="n">3</tspan>, (index) {</text></svg>
<svg style="left:9.40px;top:40.80px" width="1" height="1"><text transform="rotate(0.03)" class="lnn" fill="#4b5059" style="letter-spacing:0.037px">30</text></svg>
<svg style="left:82.40px;top:40.80px" width="1" height="1"><text transform="rotate(0.03)" class="cd" style="letter-spacing:0.015px"><tspan class="k">return</tspan> <tspan class="c">Padding</tspan>(</text></svg>
<svg style="left:9.40px;top:53.16px" width="1" height="1"><text transform="rotate(0.03)" class="lnn" fill="#4b5059" style="letter-spacing:0.037px">31</text></svg>
<svg style="left:91.22px;top:53.16px" width="1" height="1"><text transform="rotate(0.03)" class="cd" style="letter-spacing:0.015px">padding: <tspan class="k">const</tspan> <tspan class="c">EdgeInsets</tspan>.<tspan class="c">symmetric</tspan>(vertical: <tspan class="n">8</tspan>),</text></svg>
<svg style="left:9.40px;top:65.52px" width="1" height="1"><text transform="rotate(0.03)" class="lnn" fill="#4b5059" style="letter-spacing:0.037px">32</text></svg>
<svg style="left:91.22px;top:65.52px" width="1" height="1"><text transform="rotate(0.03)" class="cd" style="letter-spacing:0.015px">child: <tspan class="c">ElevatedButton</tspan>(</text></svg>
<svg style="left:9.40px;top:77.88px" width="1" height="1"><text transform="rotate(0.03)" class="lnn" fill="#4b5059" style="letter-spacing:0.037px">33</text></svg>
<svg style="left:100.04px;top:77.88px" width="1" height="1"><text transform="rotate(0.03)" class="cd" style="letter-spacing:0.015px">style: ElevatedButton.<tspan class="f">styleFrom</tspan>(</text></svg>
<svg style="left:9.40px;top:90.24px" width="1" height="1"><text transform="rotate(0.03)" class="lnn" fill="#4b5059" style="letter-spacing:0.037px">34</text></svg>
<svg style="left:108.86px;top:90.24px" width="1" height="1"><text transform="rotate(0.03)" class="cd" style="letter-spacing:0.015px">padding: <tspan class="k">const</tspan> <tspan class="c">EdgeInsets</tspan>.<tspan class="c">all</tspan>(<tspan class="n">40</tspan>),</text></svg>
<svg style="left:9.40px;top:102.60px" width="1" height="1"><text transform="rotate(0.03)" class="lnn" fill="#4b5059" style="letter-spacing:0.037px">35</text></svg>
<svg style="left:108.86px;top:102.60px" width="1" height="1"><text transform="rotate(0.03)" class="cd" style="letter-spacing:0.015px">backgroundColor: isDarkMode</text></svg>
<svg style="left:9.40px;top:114.96px" width="1" height="1"><text transform="rotate(0.03)" class="lnn" fill="#4b5059" style="letter-spacing:0.037px">36</text></svg>
<svg style="left:126.50px;top:114.96px" width="1" height="1"><text transform="rotate(0.03)" class="cd" style="letter-spacing:0.015px">? Colors.<tspan class="p">grey</tspan>.<tspan class="p">shade300</tspan> <tspan class="m">// <tspan>warna</tspan> abu <tspan>muda</tspan> <tspan>untuk</tspan> dark mode</tspan></text></svg>
<div class="abs" style="left:241.16px;top:116.86px;width:21.75px;height:0.9px;background:#4a7a50"></div>
<div class="abs" style="left:285.26px;top:116.86px;width:17.34px;height:0.9px;background:#4a7a50"></div>
<div class="abs" style="left:307.31px;top:116.86px;width:21.75px;height:0.9px;background:#4a7a50"></div>
<svg style="left:9.40px;top:127.32px" width="1" height="1"><text transform="rotate(0.03)" class="lnn" fill="#4b5059" style="letter-spacing:0.037px">37</text></svg>
<svg style="left:126.50px;top:127.32px" width="1" height="1"><text transform="rotate(0.03)" class="cd" style="letter-spacing:0.015px">: Colors.<tspan class="p">lightBlue</tspan>.<tspan class="p">shade100</tspan>,</text></svg>
<svg style="left:9.40px;top:139.68px" width="1" height="1"><text transform="rotate(0.03)" class="lnn" fill="#4b5059" style="letter-spacing:0.037px">38</text></svg>
<svg style="left:108.86px;top:139.68px" width="1" height="1"><text transform="rotate(0.03)" class="cd" style="letter-spacing:0.015px"><tspan class="m">// <tspan>warna</tspan> <tspan>biru</tspan> <tspan>muda</tspan> <tspan>untuk</tspan> light mode</tspan></text></svg>
<div class="abs" style="left:122.09px;top:141.58px;width:21.75px;height:0.9px;background:#4a7a50"></div>
<div class="abs" style="left:148.55px;top:141.58px;width:17.34px;height:0.9px;background:#4a7a50"></div>
<div class="abs" style="left:170.60px;top:141.58px;width:17.34px;height:0.9px;background:#4a7a50"></div>
<div class="abs" style="left:192.65px;top:141.58px;width:21.75px;height:0.9px;background:#4a7a50"></div>
<svg style="left:9.40px;top:152.04px" width="1" height="1"><text transform="rotate(0.03)" class="lnn" fill="#4b5059" style="letter-spacing:0.037px">39</text></svg>
<svg style="left:108.86px;top:152.04px" width="1" height="1"><text transform="rotate(0.03)" class="cd" style="letter-spacing:0.015px">foregroundColor: Colors.<tspan class="p">black</tspan>,</text></svg>
<svg style="left:9.40px;top:164.40px" width="1" height="1"><text transform="rotate(0.03)" class="lnn" fill="#4b5059" style="letter-spacing:0.037px">40</text></svg>
<svg style="left:108.86px;top:164.40px" width="1" height="1"><text transform="rotate(0.03)" class="cd" style="letter-spacing:0.015px"><tspan class="m">// <tspan>warna</tspan> <tspan>teks</tspan></tspan></text></svg>
<div class="abs" style="left:122.09px;top:166.30px;width:21.75px;height:0.9px;background:#4a7a50"></div>
<div class="abs" style="left:148.55px;top:166.30px;width:17.34px;height:0.9px;background:#4a7a50"></div>
<svg style="left:9.40px;top:176.76px" width="1" height="1"><text transform="rotate(0.03)" class="lnn" fill="#4b5059" style="letter-spacing:0.037px">41</text></svg>
<svg style="left:108.86px;top:176.76px" width="1" height="1"><text transform="rotate(0.03)" class="cd" style="letter-spacing:0.015px">shape: <tspan class="c">RoundedRectangleBorder</tspan>(</text></svg>
<svg style="left:9.40px;top:189.12px" width="1" height="1"><text transform="rotate(0.03)" class="lnn" fill="#4b5059" style="letter-spacing:0.037px">42</text></svg>
<svg style="left:117.68px;top:189.12px" width="1" height="1"><text transform="rotate(0.03)" class="cd" style="letter-spacing:0.015px">borderRadius: <tspan class="c">BorderRadius</tspan>.<tspan class="c">circular</tspan>(<tspan class="n">20</tspan>),</text></svg>
<svg style="left:9.40px;top:201.48px" width="1" height="1"><text transform="rotate(0.03)" class="lnn" fill="#4b5059" style="letter-spacing:0.037px">43</text></svg>
<svg style="left:108.86px;top:201.48px" width="1" height="1"><text transform="rotate(0.03)" class="cd" style="letter-spacing:0.015px">),  <tspan class="m">// RoundedRectangleBorder</tspan></text></svg>
<svg style="left:9.40px;top:213.84px" width="1" height="1"><text transform="rotate(0.03)" class="lnn" fill="#4b5059" style="letter-spacing:0.037px">44</text></svg>
<svg style="left:108.86px;top:213.84px" width="1" height="1"><text transform="rotate(0.03)" class="cd" style="letter-spacing:0.015px">elevation: <tspan class="n">4</tspan>,</text></svg>
<svg style="left:9.40px;top:226.20px" width="1" height="1"><text transform="rotate(0.03)" class="lnn" fill="#a1a3ab" style="letter-spacing:0.037px">45</text></svg>
<svg style="left:108.86px;top:226.20px" width="1" height="1"><text transform="rotate(0.03)" class="cd" style="letter-spacing:0.015px">shadowColor: Colors.<tspan class="p">black26</tspan>,</text></svg>
<svg style="left:9.40px;top:238.56px" width="1" height="1"><text transform="rotate(0.03)" class="lnn" fill="#4b5059" style="letter-spacing:0.037px">46</text></svg>
<svg style="left:100.04px;top:238.56px" width="1" height="1"><text transform="rotate(0.03)" class="cd" style="letter-spacing:0.015px">),</text></svg>
<svg style="left:9.40px;top:250.92px" width="1" height="1"><text transform="rotate(0.03)" class="lnn" fill="#4b5059" style="letter-spacing:0.037px">47</text></svg>
<svg style="left:100.04px;top:250.92px" width="1" height="1"><text transform="rotate(0.03)" class="cd" style="letter-spacing:0.015px">onPressed: () {</text></svg>
<svg style="left:9.40px;top:263.28px" width="1" height="1"><text transform="rotate(0.03)" class="lnn" fill="#4b5059" style="letter-spacing:0.037px">48</text></svg>
<svg style="left:108.86px;top:263.28px" width="1" height="1"><text transform="rotate(0.03)" class="cd" style="letter-spacing:0.015px">Navigator.<tspan class="f">pushNamed</tspan>(</text></svg>
<svg style="left:9.40px;top:275.64px" width="1" height="1"><text transform="rotate(0.03)" class="lnn" fill="#4b5059" style="letter-spacing:0.037px">49</text></svg>
<svg style="left:126.50px;top:275.64px" width="1" height="1"><text transform="rotate(0.03)" class="cd" style="letter-spacing:0.015px">context, <tspan class="s">'/detail'</tspan>, arguments: <tspan class="s">'<tspan>Kolam</tspan> </tspan>${index + 1}<tspan class="s">'</tspan>);</text></svg>
<div class="abs" style="left:267.62px;top:277.54px;width:21.75px;height:0.9px;background:#4a7a50"></div>
<svg style="left:9.40px;top:288.00px" width="1" height="1"><text transform="rotate(0.03)" class="lnn" fill="#4b5059" style="letter-spacing:0.037px">50</text></svg>
<svg style="left:100.04px;top:288.00px" width="1" height="1"><text transform="rotate(0.03)" class="cd" style="letter-spacing:0.015px">},</text></svg>
<svg style="left:9.40px;top:300.36px" width="1" height="1"><text transform="rotate(0.03)" class="lnn" fill="#4b5059" style="letter-spacing:0.037px">51</text></svg>
<svg style="left:100.04px;top:300.36px" width="1" height="1"><text transform="rotate(0.03)" class="cd" style="letter-spacing:0.015px">child: <tspan class="c">Text</tspan>(<tspan class="s">'<tspan>KOLAM</tspan> </tspan>${index + <tspan class="n">1</tspan>}<tspan class="s">'</tspan>),</text></svg>
<div class="abs" style="left:157.37px;top:302.26px;width:21.75px;height:0.9px;background:#4a7a50"></div>
<svg style="left:9.40px;top:312.72px" width="1" height="1"><text transform="rotate(0.03)" class="lnn" fill="#4b5059" style="letter-spacing:0.037px">52</text></svg>
<svg style="left:91.22px;top:312.72px" width="1" height="1"><text transform="rotate(0.03)" class="cd" style="letter-spacing:0.015px">),  <tspan class="m">// ElevatedButton</tspan></text></svg>
<svg style="left:9.40px;top:325.08px" width="1" height="1"><text transform="rotate(0.03)" class="lnn" fill="#4b5059" style="letter-spacing:0.037px">53</text></svg>
<svg style="left:82.40px;top:325.08px" width="1" height="1"><text transform="rotate(0.03)" class="cd" style="letter-spacing:0.015px">);  <tspan class="m">// Padding</tspan></text></svg>
<svg style="left:9.40px;top:337.44px" width="1" height="1"><text transform="rotate(0.03)" class="lnn" fill="#4b5059" style="letter-spacing:0.037px">54</text></svg>
<svg style="left:73.58px;top:337.44px" width="1" height="1"><text transform="rotate(0.03)" class="cd" style="letter-spacing:0.015px">}),  <tspan class="m">// List.generate</tspan></text></svg>
<svg style="left:9.40px;top:349.80px" width="1" height="1"><text transform="rotate(0.03)" class="lnn" fill="#4b5059" style="letter-spacing:0.037px">55</text></svg>
<svg style="left:64.76px;top:349.80px" width="1" height="1"><text transform="rotate(0.03)" class="cd" style="letter-spacing:0.015px">),  <tspan class="m">// ListView</tspan></text></svg>
<svg style="left:9.40px;top:362.16px" width="1" height="1"><text transform="rotate(0.03)" class="lnn" fill="#4b5059" style="letter-spacing:0.037px">56</text></svg>
<svg style="left:64.76px;top:362.16px" width="1" height="1"><text transform="rotate(0.03)" class="cd" style="letter-spacing:0.015px">bottomNavigationBar: <tspan class="k">const</tspan> <tspan class="c">BottomNavBar</tspan>(currentIndex: <tspan class="n">1</tspan>),</text></svg>
<svg style="left:9.40px;top:374.52px" width="1" height="1"><text transform="rotate(0.03)" class="lnn" fill="#4b5059" style="letter-spacing:0.037px">57</text></svg>
<svg style="left:55.94px;top:374.52px" width="1" height="1"><text transform="rotate(0.03)" class="cd" style="letter-spacing:0.015px">);  <tspan class="m">// Scaffold</tspan></text></svg>
<svg style="left:9.40px;top:386.88px" width="1" height="1"><text transform="rotate(0.03)" class="lnn" fill="#4b5059" style="letter-spacing:0.037px">58</text></svg>
<svg style="left:47.12px;top:386.88px" width="1" height="1"><text transform="rotate(0.03)" class="cd" style="letter-spacing:0.015px">}</text></svg>
<svg style="left:9.40px;top:399.24px" width="1" height="1"><text transform="rotate(0.03)" class="lnn" fill="#4b5059" style="letter-spacing:0.037px">59</text></svg>
<svg style="left:38.30px;top:399.24px" width="1" height="1"><text transform="rotate(0.03)" class="cd" style="letter-spacing:0.015px">}</text></svg>
<div class="abs" style="left:20.80000000000001px;top:108.88px;width:6.2px;height:6.2px;background:#e0e0e0"></div>
<div class="abs" style="left:20.80000000000001px;top:121.24px;width:6.2px;height:6.2px;background:#b3e5fc"></div>
<div class="abs" style="left:20.80000000000001px;top:145.96px;width:6.2px;height:6.2px;background:#000000"></div>
<div class="abs" style="left:20.80000000000001px;top:220.12px;width:6.2px;height:6.2px;background:#1a1b1d"></div>
<div class="abs" style="left:39.4px;top:458.8px;width:222.6px;height:4.8px;background:#4d4e51"></div>
<div class="abs" style="left:0;top:0;width:330px;height:23.3px;background:#1e1f22;border-bottom:1px solid #2a2c2f"></div>
</div>
<svg style="left:291.00px;top:34.20px" width="1" height="1"><g transform="scale(1.000)"><path d="M-1.2 -3.7 Q0.8 -4 2.4 -2.6 Q3.9 -1 3.6 1.2 Q3.2 3 1.2 3.6 Q-0.8 4 -2.4 2.8 Q-3.9 1.2 -3.5 -1 Q-3 -3 -1.2 -3.7Z" fill="#2db8f6"/><path d="M-1.6 -3.5 Q0.8 -4.1 2.5 -2.6 Q3.9 -1 3.6 1.2 Q3.5 1.8 3.2 2.3 Z" fill="#2b8fe1"/><path d="M-2 -2.9 L2.5 1.9" stroke="#0f4f9f" stroke-width="1.15" stroke-linecap="round"/></g></svg>
<svg style="left:298.40px;top:36.90px" width="1" height="1"><text transform="rotate(0.03)" font-size="8.2" fill="#ced0d6" style="letter-spacing:-0.248px;">main.dart</text></svg>
<svg style="left:358.60px;top:34.20px" width="1" height="1"><g transform="scale(1.000)"><path d="M-1.2 -3.7 Q0.8 -4 2.4 -2.6 Q3.9 -1 3.6 1.2 Q3.2 3 1.2 3.6 Q-0.8 4 -2.4 2.8 Q-3.9 1.2 -3.5 -1 Q-3 -3 -1.2 -3.7Z" fill="#2db8f6"/><path d="M-1.6 -3.5 Q0.8 -4.1 2.5 -2.6 Q3.9 -1 3.6 1.2 Q3.5 1.8 3.2 2.3 Z" fill="#2b8fe1"/><path d="M-2 -2.9 L2.5 1.9" stroke="#0f4f9f" stroke-width="1.15" stroke-linecap="round"/></g></svg>
<svg style="left:366.00px;top:36.90px" width="1" height="1"><text transform="rotate(0.03)" font-size="8.2" fill="#dfe1e5" style="letter-spacing:-0.302px;">home_page.dart</text></svg>
<svg style="left:430.40px;top:34.20px" width="1" height="1"><path d="M-1.7 -1.7 L1.7 1.7 M1.7 -1.7 L-1.7 1.7" stroke="#7d8188" stroke-width="0.7"/></svg>
<div class="abs" style="left:347.4px;top:43.4px;width:92px;height:1.7px;background:#73767d;border-radius:1px"></div>
<div class="abs" style="left:446.6px;top:30.4px;width:7.4px;height:7.4px;border:0.9px solid #57965c;border-radius:1.6px"></div>
<svg style="left:448.20px;top:35.96px" width="1" height="1"><text transform="rotate(0.03)" font-size="5" font-weight="bold" fill="#57965c" style="">M</text></svg>
<svg style="left:457.20px;top:36.90px" width="1" height="1"><text transform="rotate(0.03)" font-size="8.2" fill="#ced0d6" style="letter-spacing:-0.183px;">AndroidManifest.xml</text></svg>
<svg style="left:557.40px;top:34.20px" width="1" height="1"><g transform="scale(1.000)"><path d="M-1.2 -3.7 Q0.8 -4 2.4 -2.6 Q3.9 -1 3.6 1.2 Q3.2 3 1.2 3.6 Q-0.8 4 -2.4 2.8 Q-3.9 1.2 -3.5 -1 Q-3 -3 -1.2 -3.7Z" fill="#2db8f6"/><path d="M-1.6 -3.5 Q0.8 -4.1 2.5 -2.6 Q3.9 -1 3.6 1.2 Q3.5 1.8 3.2 2.3 Z" fill="#2b8fe1"/><path d="M-2 -2.9 L2.5 1.9" stroke="#0f4f9f" stroke-width="1.15" stroke-linecap="round"/></g></svg>
<svg style="left:564.40px;top:36.90px" width="1" height="1"><text transform="rotate(0.03)" font-size="8.2" fill="#6f737a" style="">d:</text></svg>
<svg style="left:582.40px;top:34.20px" width="1" height="1"><path d="M-2.2 -1.1 L0 1.1 L2.2 -1.1" transform="scale(1.15)" fill="none" stroke="#ced0d6" stroke-width="0.8" stroke-linecap="round" stroke-linejoin="round"/></svg>
<div class="abs" style="left:596px;top:30.90px;width:1.3px;height:1.3px;background:#ced0d6;border-radius:1px"></div>
<div class="abs" style="left:596px;top:33.70px;width:1.3px;height:1.3px;background:#ced0d6;border-radius:1px"></div>
<div class="abs" style="left:596px;top:36.50px;width:1.3px;height:1.3px;background:#ced0d6;border-radius:1px"></div>
<svg style="left:551.60px;top:53.40px" width="1" height="1"><path d="M0 -2.8 L3 2.4 L-3 2.4 Z" fill="#d6ae58"/></svg>
<svg style="left:555.80px;top:55.88px" width="1" height="1"><text transform="rotate(0.03)" font-size="7.6" fill="#ced0d6" style="">1</text></svg>
<svg style="left:568.20px;top:53.40px" width="1" height="1"><path d="M-2.8 -0.4 L-0.8 1.6 L2.8 -2.4 M-2.8 3.4 H2.8" fill="none" stroke="#57965c" stroke-width="0.9"/></svg>
<svg style="left:572.40px;top:55.88px" width="1" height="1"><text transform="rotate(0.03)" font-size="7.6" fill="#ced0d6" style="">12</text></svg>
<svg style="left:588.00px;top:53.40px" width="1" height="1"><path d="M-2.2 1.1 L0 -1.1 L2.2 1.1" transform="scale(1.0)" fill="none" stroke="#9da0a8" stroke-width="0.8" stroke-linecap="round" stroke-linejoin="round"/></svg>
<svg style="left:600.20px;top:53.40px" width="1" height="1"><path d="M-2.2 -1.1 L0 1.1 L2.2 -1.1" transform="scale(1.0)" fill="none" stroke="#9da0a8" stroke-width="0.8" stroke-linecap="round" stroke-linejoin="round"/></svg>
<div id="rd" class="abs"></div>
<svg style="left:615.20px;top:36.92px" width="1" height="1"><text transform="rotate(0.03)" font-size="8.3" fill="#e6e8ec" style="letter-spacing:-0.325px;stroke:#e6e8ec;stroke-width:0.2px;">Running Devices</text></svg>
<svg style="left:693.60px;top:34.40px" width="1" height="1"><rect x="-2.6" y="-3.6" width="5" height="7.2" rx="0.9" fill="none" stroke="#ced0d6" stroke-width="0.8"/><rect x="-0.4" y="0.2" width="4.2" height="3.6" fill="#2b2d30" stroke="#a36bd6" stroke-width="0.8"/><circle cx="3.8" cy="3.6" r="0.9" fill="#3ddc5f"/></svg>
<svg style="left:700.40px;top:36.90px" width="1" height="1"><text transform="rotate(0.03)" font-size="8.2" fill="#dfe1e5" style="letter-spacing:-0.223px;">Pixel 3 API Tira...andbox</text></svg>
<svg style="left:792.90px;top:34.40px" width="1" height="1"><path d="M-1.7 -1.7 L1.7 1.7 M1.7 -1.7 L-1.7 1.7" stroke="#7d8188" stroke-width="0.7"/></svg>
<svg style="left:808.40px;top:33.80px" width="1" height="1"><path d="M-3.4 0 H3.4 M0 -3.4 V3.4" stroke="#ced0d6" stroke-width="0.85"/></svg>
<div class="abs" style="left:682.6px;top:43.6px;width:118.2px;height:1.6px;background:#3574f0;border-radius:1px"></div>
<div class="abs" style="left:608px;top:45.2px;width:309.4px;height:0.8px;background:#1e1f22"></div>
<div class="abs" style="left:608px;top:65.2px;width:309.4px;height:0.8px;background:#1e1f22"></div>
<svg style="left:876.40px;top:34.60px" width="1" height="1"><rect x="-3" y="-3" width="6" height="6" fill="none" stroke="#ced0d6" stroke-width="0.8"/><rect x="-3" y="-3" width="6" height="1.8" fill="#ced0d6"/></svg>
<div class="abs" style="left:891px;top:31.20px;width:1.2px;height:1.2px;background:#ced0d6;border-radius:1px"></div>
<div class="abs" style="left:891px;top:34.00px;width:1.2px;height:1.2px;background:#ced0d6;border-radius:1px"></div>
<div class="abs" style="left:891px;top:36.80px;width:1.2px;height:1.2px;background:#ced0d6;border-radius:1px"></div>
<div class="abs" style="left:902.4px;top:34px;width:6.6px;height:0.9px;background:#9da0a8"></div>
<svg style="left:619.00px;top:55.20px" width="1" height="1"><path d="M-1.7 -2.2 A2.9 2.9 0 1 0 1.7 -2.2 M0 -3.4 V-0.4" fill="none" stroke="#c6c8ce" stroke-width="0.8" stroke-linecap="round"/></svg>
<svg style="left:633.00px;top:55.20px" width="1" height="1"><path d="M-3.6 -1 H-2.2 L-0.4 -2.6 V2.6 L-2.2 1 H-3.6 Z" fill="none" stroke="#c6c8ce" stroke-width="0.75" stroke-linejoin="round"/><path d="M1 -1.4 Q2 0 1 1.4 M2.4 -2.6 Q4.2 0 2.4 2.6" fill="none" stroke="#c6c8ce" stroke-width="0.75"/></svg>
<svg style="left:647.40px;top:55.20px" width="1" height="1"><path d="M-2.8 -1 H-1.4 L0.4 -2.6 V2.6 L-1.4 1 H-2.8 Z" fill="none" stroke="#c6c8ce" stroke-width="0.75" stroke-linejoin="round"/><path d="M1.8 -1.4 Q2.8 0 1.8 1.4" fill="none" stroke="#c6c8ce" stroke-width="0.75"/></svg>
<div class="abs" style="left:657.4px;top:49.6px;width:0.8px;height:11.2px;background:#43454a"></div>
<svg style="left:666.20px;top:55.20px" width="1" height="1"><rect x="-3.2" y="-2.8" width="4.4" height="5.8" rx="0.6" fill="none" stroke="#c6c8ce" stroke-width="0.8"/><path d="M2 -3 Q4 0 2 3" fill="none" stroke="#548af7" stroke-width="0.9"/></svg>
<svg style="left:681.60px;top:55.20px" width="1" height="1"><rect x="-1.2" y="-2.8" width="4.4" height="5.8" rx="0.6" fill="none" stroke="#c6c8ce" stroke-width="0.8"/><path d="M-2 -3 Q-4 0 -2 3" fill="none" stroke="#548af7" stroke-width="0.9"/></svg>
<div class="abs" style="left:690.2px;top:49.6px;width:0.8px;height:11.2px;background:#43454a"></div>
<svg style="left:700.80px;top:55.20px" width="1" height="1"><path d="M1.6 -2.4 L-2.2 0 L1.6 2.4 Z" fill="none" stroke="#c6c8ce" stroke-width="0.75" stroke-linejoin="round"/></svg>
<svg style="left:714.60px;top:55.20px" width="1" height="1"><circle r="2.5" fill="none" stroke="#c6c8ce" stroke-width="0.8"/></svg>
<svg style="left:728.60px;top:55.20px" width="1" height="1"><rect x="-2.1" y="-2.1" width="4.2" height="4.2" rx="0.5" fill="none" stroke="#c6c8ce" stroke-width="0.8"/></svg>
<div class="abs" style="left:737.2px;top:49.6px;width:0.8px;height:11.2px;background:#43454a"></div>
<svg style="left:747.80px;top:55.20px" width="1" height="1"><path d="M-3.8 -1.6 Q-3.8 -2.4 -3 -2.4 H-2 L-1.2 -3.4 H1.2 L2 -2.4 H3 Q3.8 -2.4 3.8 -1.6 V2.4 Q3.8 3.2 3 3.2 H-3 Q-3.8 3.2 -3.8 2.4 Z" fill="none" stroke="#c6c8ce" stroke-width="0.75"/><circle cy="0.5" r="1.5" fill="none" stroke="#c6c8ce" stroke-width="0.75"/></svg>
<svg style="left:761.80px;top:55.20px" width="1" height="1"><rect x="-4" y="-2.6" width="5.8" height="5.2" rx="0.8" fill="none" stroke="#c6c8ce" stroke-width="0.8"/><path d="M1.8 -0.6 L4 -2 V2 L1.8 0.6" fill="none" stroke="#c6c8ce" stroke-width="0.75" stroke-linejoin="round"/></svg>
<div class="abs" style="left:771px;top:49.6px;width:0.8px;height:11.2px;background:#43454a"></div>
<svg style="left:780.80px;top:55.20px" width="1" height="1"><path d="M-2.4 -2 A3.1 3.1 0 1 1 -3 1" fill="none" stroke="#c6c8ce" stroke-width="0.8"/><path d="M-3.6 -3.4 V-1.2 H-1.4" fill="none" stroke="#c6c8ce" stroke-width="0.8"/><circle cx="0.2" cy="0.2" r="0.7" fill="#c6c8ce"/></svg>
<svg style="left:795.20px;top:55.20px" width="1" height="1"><rect x="-3.8" y="-3" width="6.8" height="4.6" rx="0.8" fill="none" stroke="#c6c8ce" stroke-width="0.8"/><path d="M-2.4 -0.8 H1.4" stroke="#c6c8ce" stroke-width="0.7"/><circle cx="2.6" cy="2.2" r="1.5" fill="#2b2d30" stroke="#c6c8ce" stroke-width="0.7"/></svg>
<div class="abs" style="left:809.4px;top:51.60px;width:1.2px;height:1.2px;background:#c6c8ce;border-radius:1px"></div>
<div class="abs" style="left:809.4px;top:54.50px;width:1.2px;height:1.2px;background:#c6c8ce;border-radius:1px"></div>
<div class="abs" style="left:809.4px;top:57.40px;width:1.2px;height:1.2px;background:#c6c8ce;border-radius:1px"></div>
<svg style="left:905.60px;top:55.60px" width="1" height="1"><path d="M-3.6 -3 H2.2 V-0.4 M-3.6 -3 V1.6 H-0.6" fill="none" stroke="#c6c8ce" stroke-width="0.8"/><circle cx="1.4" cy="1.2" r="1.7" fill="none" stroke="#c6c8ce" stroke-width="0.75"/><path d="M2.6 2.4 L3.8 3.6" stroke="#c6c8ce" stroke-width="0.8"/></svg>
<div class="abs" style="left:664.90px;top:66.00px;width:194.60px;height:418.50px;border-radius:25.0px 25.0px 22.0px 22.0px;background:#0b0b0c"></div>
<div class="abs" style="left:666.10px;top:67.20px;width:192.20px;height:416.10px;border-radius:23.8px 23.8px 20.8px 20.8px;border:1.2px solid #6a6c6f;border-left-color:#8e9093;border-right-color:#8e9093;border-bottom-color:#55575a"></div>
<div class="abs" style="left:667.30px;top:68.40px;width:189.80px;height:413.70px;border-radius:22.6px 22.6px 19.6px 19.6px;background:#070708"></div>
<div class="abs" style="left:668.30px;top:69.40px;width:187.80px;height:411.70px;border-radius:21.6px 21.6px 18.6px 18.6px;border:1px solid #38393b"></div>
<div class="abs" style="left:669.30px;top:70.40px;width:185.80px;height:409.70px;border-radius:20.6px 20.6px 17.6px 17.6px;background:#060607"></div>
<svg style="left:700.20px;top:86.20px" width="1" height="1"><circle r="4" fill="#10141a" stroke="#232b35" stroke-width="1"/><circle r="1.7" fill="#1d252f"/><path d="M-1 -1 L1 1 M1 -1 L-1 1" stroke="#2c3644" stroke-width="0.5"/></svg>
<svg style="left:724.80px;top:86.20px" width="1" height="1"><circle r="4" fill="#10141a" stroke="#232b35" stroke-width="1"/><circle r="1.7" fill="#1d252f"/><path d="M-1 -1 L1 1 M1 -1 L-1 1" stroke="#2c3644" stroke-width="0.5"/></svg>
<div class="abs" style="left:740px;top:78.4px;width:45px;height:2.4px;border-radius:1.2px;background:repeating-linear-gradient(90deg,#1f2022 0,#1f2022 0.9px,#0d0d0e 0.9px,#0d0d0e 1.8px)"></div>
<svg style="left:794.00px;top:86.20px" width="1" height="1"><circle r="2.2" fill="#000"/></svg>
<div class="abs" style="left:740.4px;top:470.4px;width:44px;height:2.2px;border-radius:1.1px;background:repeating-linear-gradient(90deg,#242527 0,#242527 0.9px,#111112 0.9px,#111112 1.8px)"></div>
<div class="abs" style="left:859.4px;top:156px;width:1.3px;height:19.5px;background:#3c3e41;border-radius:0 1px 1px 0"></div>
<div class="abs" style="left:859.4px;top:189px;width:1.3px;height:91px;background:#3c3e41;border-radius:0 1px 1px 0"></div>
<div class="abs" style="left:672.7px;top:97.8px;width:179.3px;height:358.2px;background:#000;border-radius:8.4px 8.4px 9px 9px;overflow:hidden">
<div class="abs" style="left:0;top:0;width:180px;height:321.2px;background:#fff"></div>
<div class="abs" style="left:0;top:0;width:180px;height:36.4px;background:#1e88e5"></div>
<div class="abs" style="left:28.4px;top:2.8px;width:4.6px;height:5.8px;background:#fff;border-radius:1.6px 0.6px 0.6px 0.6px"></div>
<svg style="left:146px;top:2.7px" width="22" height="7" viewBox="0 0 22 7"><path d="M0.2 1.7 Q3.4 -0.9 6.6 1.7 L3.4 6 Z" fill="#fff"/><path d="M6.9 6 L12 6 L12 0.7 Z" fill="#fff"/><rect x="14.6" y="0.5" width="3.2" height="5.6" rx="0.6" fill="#fff"/></svg>
<div class="abs" style="left:153.2px;top:15.8px;width:24.4px;height:14.4px;border-radius:7.2px;background:#fff;border:1.3px solid #121212"></div>
<div class="abs" style="left:157.6px;top:19.8px;width:6.4px;height:6.4px;border-radius:4px;background:#121212"></div>
<div class="abs" style="left:7.8px;top:48.10px;width:164.2px;height:44.9px;border-radius:7.4px;background:#b3e5fc;box-shadow:0 0.8px 1.6px rgba(0,0,0,.22)"></div>
<div class="abs" style="left:7.8px;top:101.05px;width:164.2px;height:44.9px;border-radius:7.4px;background:#b3e5fc;box-shadow:0 0.8px 1.6px rgba(0,0,0,.22)"></div>
<div class="abs" style="left:7.8px;top:154.00px;width:164.2px;height:44.9px;border-radius:7.4px;background:#b3e5fc;box-shadow:0 0.8px 1.6px rgba(0,0,0,.22)"></div>
<div class="abs" style="left:0;top:321.2px;width:180px;height:26.8px;background:#1e88e5"></div>
<div class="abs" style="left:65.2px;top:352.2px;width:49.4px;height:1.8px;background:#f2f2f2;border-radius:1px"></div>
</div>
<svg style="left:681.40px;top:105.54px" width="1" height="1"><text transform="rotate(0.03)" font-size="5.8" fill="#fff" style="letter-spacing:0.379px;stroke:#fff;stroke-width:0.15px;">11:03</text></svg>
<svg style="left:680.00px;top:125.13px" width="1" height="1"><text transform="rotate(0.03)" font-size="10.6" fill="#fff" style="letter-spacing:-0.432px;stroke:#fff;stroke-width:0.2px;">Dashboard</text></svg>
<svg style="left:748.60px;top:170.55px" width="1" height="1"><text transform="rotate(0.03)" font-size="6.1" font-weight="bold" fill="#0b0b0b" style="letter-spacing:-0.142px;">KOLAM 1</text></svg>
<svg style="left:748.60px;top:223.50px" width="1" height="1"><text transform="rotate(0.03)" font-size="6.1" font-weight="bold" fill="#0b0b0b" style="letter-spacing:-0.142px;">KOLAM 2</text></svg>
<svg style="left:748.60px;top:276.45px" width="1" height="1"><text transform="rotate(0.03)" font-size="6.1" font-weight="bold" fill="#0b0b0b" style="letter-spacing:-0.142px;">KOLAM 3</text></svg>
<svg style="left:702.40px;top:427.40px" width="1" height="1"><g transform="scale(1.12)"><circle r="2.6" fill="none" stroke="#d6e8fb" stroke-width="2.2" stroke-dasharray="1.36 0.68"/><circle r="2.2" fill="none" stroke="#d6e8fb" stroke-width="1.2"/></g></svg>
<svg style="left:762.00px;top:427.40px" width="1" height="1"><path d="M0 -4.2 L-4.6 0 H-3.2 V4 H-1 V1.2 H1 V4 H3.2 V0 H4.6 Z" fill="#fff"/></svg>
<svg style="left:822.00px;top:427.40px" width="1" height="1"><circle r="4.3" fill="#e1eefc"/><rect x="-0.6" y="-0.8" width="1.2" height="3.2" fill="#1e88e5"/><rect x="-0.6" y="-2.6" width="1.2" height="1.1" fill="#1e88e5"/></svg>
<div class="abs" style="left:892.6px;top:414.4px;width:15.4px;height:60px;border:0.8px solid #393b40;border-radius:2px"></div>
<svg style="left:900.20px;top:422.60px" width="1" height="1"><path d="M-3.6 0 H3.6 M0 -3.6 V3.6" stroke="#ced0d6" stroke-width="0.8"/></svg>
<svg style="left:900.20px;top:436.40px" width="1" height="1"><path d="M-3.6 0 H3.6" stroke="#5a5d63" stroke-width="0.8"/></svg>
<svg style="left:896.80px;top:453.57px" width="1" height="1"><text transform="rotate(0.03)" font-size="5.6" font-weight="bold" fill="#ced0d6" style="letter-spacing:-0.647px;">1:1</text></svg>
<svg style="left:900.20px;top:466.00px" width="1" height="1"><rect x="-3.6" y="-3" width="7.2" height="6" rx="0.9" fill="none" stroke="#5a5d63" stroke-width="0.8"/><path d="M-1.8 1.4 L1.8 -1.4" stroke="#5a5d63" stroke-width="0.7"/></svg>
<div id="rstrip" class="abs"></div>
<svg style="left:929.00px;top:34.20px" width="1" height="1"><path d="M-3.4 2.4 H3.4 L2.4 1 V-1.2 A2.4 2.6 0 0 0 -2.4 -1.2 V1 Z" fill="none" stroke="#ced0d6" stroke-width="0.9" stroke-linejoin="round"/><path d="M-1 3.6 H1" stroke="#ced0d6" stroke-width="0.9"/><circle cx="2.8" cy="-3.4" r="1.5" fill="#f0605d"/></svg>
<svg style="left:929.00px;top:56.20px" width="1" height="1"><rect x="-3.6" y="-4.2" width="5.4" height="8.2" rx="1" fill="none" stroke="#ced0d6" stroke-width="0.9"/><path d="M-0.4 4 Q-0.4 1 2.2 1 Q4.8 1 4.8 4 Z" fill="#2b2d30" stroke="#ced0d6" stroke-width="0.8"/></svg>
<div class="abs" style="left:920.8px;top:70.6px;width:16.8px;height:16.8px;border-radius:3.4px;background:#3574f0"></div>
<svg style="left:929.00px;top:79.00px" width="1" height="1"><rect x="-3.4" y="-4.2" width="5.4" height="8.2" rx="1" fill="none" stroke="#fff" stroke-width="0.9"/><rect x="0.4" y="0.8" width="4" height="3.4" fill="#3574f0" stroke="#fff" stroke-width="0.7"/><circle cx="4.2" cy="4" r="1" fill="#3ddc5f"/></svg>
<svg style="left:929.00px;top:101.40px" width="1" height="1"><path d="M0 -4.9 Q0.7 -0.7 4.9 0 Q0.7 0.7 0 4.9 Q-0.7 0.7 -4.9 0 Q-0.7 -0.7 0 -4.9Z" fill="#e3e5e9"/></svg>
<svg style="left:928.60px;top:123.80px" width="1" height="1"><path d="M-3.8 0.6 L0.8 -4 L3 -4 L-2.7 1.7 Z" fill="#54c5f8"/><path d="M-1.2 2.2 L0.8 0.2 L3 0.2 L0 3.2 L3 4.4 L0.8 4.4 Z" fill="#29a3e8"/><circle cx="3.2" cy="3.6" r="1.1" fill="#3ddc5f"/></svg>
<svg style="left:928.60px;top:146.00px" width="1" height="1"><path d="M-3.8 0.6 L0.8 -4 L3 -4 L-2.7 1.7 Z" fill="#54c5f8"/><path d="M-1.2 2.2 L0.8 0.2 L3 0.2 L0 3.2 L3 4.4 L0.8 4.4 Z" fill="#29a3e8"/><circle cx="3.2" cy="3.6" r="1.1" fill="#3ddc5f"/></svg>
<svg style="left:928.60px;top:168.20px" width="1" height="1"><path d="M-3.8 0.6 L0.8 -4 L3 -4 L-2.7 1.7 Z" fill="#54c5f8"/><path d="M-1.2 2.2 L0.8 0.2 L3 0.2 L0 3.2 L3 4.4 L0.8 4.4 Z" fill="#29a3e8"/></svg>
<div class="abs" style="left:0;top:22.1px;width:940px;height:1.2px;background:#1f2023"></div>
<div id="status" class="abs"></div>
<svg style="left:10.00px;top:495.20px" width="1" height="1"><rect x="-1.9" y="-1.9" width="3.8" height="3.8" rx="0.7" fill="none" stroke="#548af7" stroke-width="0.9"/></svg>
<svg style="left:15.00px;top:497.09px" width="1" height="1"><text transform="rotate(0.03)" font-size="7.8" fill="#9da0a8" style="letter-spacing:0.021px;">kntl</text></svg>
<svg style="left:34.20px;top:495.00px" width="1" height="1"><path d="M-1.1 -2.2 L1.1 0 L-1.1 2.2" transform="scale(1.0)" fill="none" stroke="#9da0a8" stroke-width="0.75" stroke-linecap="round" stroke-linejoin="round"/></svg>
<svg style="left:45.60px;top:494.80px" width="1" height="1"><path d="M-3.7 -2 Q-3.7 -3 -2.7 -3 L-1.2 -3 L-0.2 -2 L2.7 -2 Q3.7 -2 3.7 -1 L3.7 2 Q3.7 3 2.7 3 L-2.7 3 Q-3.7 3 -3.7 2 Z" fill="none" stroke="#c77d55" stroke-width="0.8"/></svg>
<svg style="left:52.20px;top:497.09px" width="1" height="1"><text transform="rotate(0.03)" font-size="7.8" fill="#9da0a8" style="letter-spacing:-0.036px;">.dart_tool</text></svg>
<svg style="left:767.80px;top:497.65px" width="1" height="1"><text transform="rotate(0.03)" font-size="7.8" fill="#9397a0" style="letter-spacing:0.220px;">45:45</text></svg>
<svg style="left:797.60px;top:497.65px" width="1" height="1"><text transform="rotate(0.03)" font-size="7.8" fill="#9397a0" style="letter-spacing:-0.703px;">LF</text></svg>
<svg style="left:814.80px;top:497.65px" width="1" height="1"><text transform="rotate(0.03)" font-size="7.8" fill="#9397a0" style="letter-spacing:0.075px;">UTF-8</text></svg>
<svg style="left:851.00px;top:494.60px" width="1" height="1"><path d="M-3.2 -2.8 H3.2 V2 H1 L2.6 3.6 M-3.2 -2.8 V2 H0" fill="none" stroke="#ced0d6" stroke-width="0.8"/><path d="M0 -1.4 V0.2" stroke="#ced0d6" stroke-width="0.8"/></svg>
<svg style="left:869.60px;top:494.60px" width="1" height="1"><path d="M-3.6 1.4 L1.6 -3.2 L4 -1 L-1.2 3.2 Z" fill="#ced0d6"/><path d="M-3.6 1.6 L-4.2 3.8 L-1.6 3.2" fill="#9da0a8"/></svg>
<svg style="left:882.00px;top:497.09px" width="1" height="1"><text transform="rotate(0.03)" font-size="7.8" fill="#9397a0" style="letter-spacing:-0.117px;">2 spaces</text></svg>
<svg style="left:927.40px;top:495.00px" width="1" height="1"><rect x="-3" y="-0.6" width="5" height="3.8" rx="0.7" fill="none" stroke="#ced0d6" stroke-width="0.8"/><path d="M0.8 -0.6 V-2 A1.5 1.5 0 0 1 3.8 -2 V-1.2" fill="none" stroke="#ced0d6" stroke-width="0.8"/></svg>
<div id="task" class="abs"></div>
<div class="abs" style="left:0;top:502.8px;width:940px;height:0.8px;background:#2d302f"></div>
<div class="abs" style="left:301.40px;top:509.80px;width:6.1px;height:6.1px;background:linear-gradient(135deg,#6fd6fb,#22a4ea);border-radius:0.6px"></div>
<div class="abs" style="left:308.10px;top:509.80px;width:6.1px;height:6.1px;background:linear-gradient(135deg,#6fd6fb,#22a4ea);border-radius:0.6px"></div>
<div class="abs" style="left:301.40px;top:516.50px;width:6.1px;height:6.1px;background:linear-gradient(135deg,#6fd6fb,#22a4ea);border-radius:0.6px"></div>
<div class="abs" style="left:308.10px;top:516.50px;width:6.1px;height:6.1px;background:linear-gradient(135deg,#6fd6fb,#22a4ea);border-radius:0.6px"></div>
<div class="abs" style="left:326.4px;top:513px;width:10.6px;height:9.2px;background:#626567;border-radius:1px"></div>
<div class="abs" style="left:329px;top:509.6px;width:11.2px;height:9.8px;background:linear-gradient(135deg,#c9cbcc,#f6f7f7 70%);border-radius:1px"></div>
<div class="abs" style="left:351.8px;top:510.10px;width:12.4px;height:12.4px;background:#fff;border-radius:2.8px"></div>
<svg style="left:358.00px;top:516.30px" width="1" height="1"><path d="M-3.5 -2.9 H2.4 L3.5 -1.6 L-3.5 1.6 L-2.4 2.9 H3.5 M-3.5 -1.6 L3.5 1.6" fill="none" stroke="#111" stroke-width="1.25" stroke-linejoin="round"/></svg>
<svg style="left:383.00px;top:516.20px" width="1" height="1"><circle r="6.2" fill="#e94235"/><path d="M0 0 L-5.37 -3.10 A6.2 6.2 0 0 0 -0.00 6.2 Z" fill="#34a853" transform="rotate(8)"/><path d="M0 0 L5.70 -2.36 A6.2 6.2 0 0 1 0 6.2 Z" fill="#fbbc04" transform="rotate(8)"/><circle r="2.85" fill="#fff"/><circle r="2.23" fill="#4285f4"/></svg>
<svg style="left:407.40px;top:516.20px" width="1" height="1"><circle r="6.2" fill="#1b82d6"/><path d="M-6.2 0.6 A6.2 6.2 0 0 1 5.8 -2 Q3 -4.2 -0.6 -3.4 Q-4.4 -2.4 -6.2 0.6Z" fill="#35c1b1"/><path d="M-2.6 0.8 Q-2.2 -2.2 1 -2.2 Q3.8 -2 4.2 0.4 Q2 1.6 0.4 0.4 Q-0.4 3 2.6 4.6 Q-1.8 5.4 -2.6 0.8Z" fill="#0c4a8f"/></svg>
<svg style="left:432.80px;top:516.20px" width="1" height="1"><path d="M-6 -4.6 H-1.6 L-0.4 -3.2 H6 V4.8 H-6 Z" fill="#f5b92e"/><rect x="-6" y="-1.6" width="12" height="6.4" fill="#fbd35a"/><rect x="-3" y="1.8" width="6" height="3" fill="#2f87d6"/></svg>
<div class="abs" style="left:430.6px;top:526.2px;width:4.6px;height:1.1px;background:#8f9293;border-radius:1px"></div>
<svg style="left:457.80px;top:516.20px" width="1" height="1"><rect x="-2.8" y="-5.8" width="9" height="11.6" rx="1" fill="#2b7cd3"/><rect x="-2.8" y="-0.2" width="9" height="6" fill="#185abd"/><rect x="-6.2" y="-3.4" width="7" height="7" rx="0.8" fill="#103f91"/></svg>
<svg style="left:452.80px;top:517.92px" width="1" height="1"><text transform="rotate(0.03)" font-size="4.6" font-weight="bold" fill="#fff" style="">W</text></svg>
<div class="abs" style="left:455.4px;top:526.2px;width:4.6px;height:1.1px;background:#8f9293;border-radius:1px"></div>
<div class="abs" style="left:475.8px;top:510.00px;width:12.8px;height:12.6px;background:#1b9aa0;border-radius:2.6px"></div>
<svg style="left:482.20px;top:516.20px" width="1" height="1"><ellipse cx="-2.1" rx="2.1" ry="1.7" fill="none" stroke="#e6f4f4" stroke-width="0.9"/><ellipse cx="2.1" rx="2.1" ry="1.7" fill="none" stroke="#e6f4f4" stroke-width="0.9"/></svg>
<svg style="left:507.00px;top:516.20px" width="1" height="1"><circle r="6.2" fill="#1a6fd8"/><path d="M-5 -3.4 Q-2 -7.4 4 -5 Q5.6 -1 2 1 Q-1.4 -3.2 -5 -3.4Z" fill="#3aa0f5"/><ellipse cx="0.2" cy="1.6" rx="3.4" ry="2.8" fill="#cfe6fb"/></svg>
<svg style="left:532.20px;top:516.20px" width="1" height="1"><path d="M-6 -5.4 H-1.6 L-3 -4 L0 -1.2 L3 -4 L1.6 -5.4 H6 V-1 L4.6 -2.4 L2 0 L4.6 2.6 L6 1.2 V5.6 H1.6 L3 4.2 L0 1.4 V5.8 H-1.8 V1.4 L-4.6 -2.4 L-6 -1 Z" fill="#eab308"/></svg>
<div class="abs" style="left:546.2px;top:504.8px;width:22.2px;height:22.8px;background:#2f3735;border-radius:2.2px"></div>
<svg style="left:557.20px;top:516.00px" width="1" height="1"><circle r="6.1" fill="#f4f6f8"/><path d="M0 -3.8 L-2.8 3.4 M0 -3.8 L2.8 3.4 M-1.8 1 H1.8" fill="none" stroke="#3b7cf0" stroke-width="1.3" stroke-linecap="round"/><circle cy="-3.6" r="1.1" fill="#3ddc84"/></svg>
<div class="abs" style="left:552.6px;top:526px;width:9.4px;height:1.3px;background:#b8bbbc;border-radius:1px"></div>
<svg style="left:582.20px;top:516.20px" width="1" height="1"><path d="M3 -6.2 L6 -4.8 V4.8 L3 6.2 L-3.4 0.6 L-5.2 2 L-6.2 1.2 L-4.6 0 L-6.2 -1.2 L-5.2 -2 L-3.4 -0.6 Z M3 -2.8 L-0.6 0 L3 2.8 Z" fill="#2a9df4" fill-rule="evenodd"/></svg>
<div class="abs" style="left:580px;top:526.2px;width:4.6px;height:1.1px;background:#8f9293;border-radius:1px"></div>
<svg style="left:606.60px;top:516.80px" width="1" height="1"><circle r="6" fill="#e94235"/><path d="M0 0 L-5.20 -3.00 A6 6 0 0 0 -0.00 6 Z" fill="#34a853" transform="rotate(8)"/><path d="M0 0 L5.52 -2.28 A6 6 0 0 1 0 6 Z" fill="#fbbc04" transform="rotate(8)"/><circle r="2.76" fill="#fff"/><circle r="2.16" fill="#4285f4"/></svg>
<svg style="left:612.40px;top:511.20px" width="1" height="1"><circle r="3.1" fill="#8a63d2"/></svg>
<svg style="left:611.40px;top:512.47px" width="1" height="1"><text transform="rotate(0.03)" font-size="3.6" fill="#fff" style="">k</text></svg>
<div class="abs" style="left:604.4px;top:526.2px;width:4.6px;height:1.1px;background:#8f9293;border-radius:1px"></div>
<svg style="left:631.60px;top:516.80px" width="1" height="1"><circle r="6" fill="#e94235"/><path d="M0 0 L-5.20 -3.00 A6 6 0 0 0 -0.00 6 Z" fill="#34a853" transform="rotate(8)"/><path d="M0 0 L5.52 -2.28 A6 6 0 0 1 0 6 Z" fill="#fbbc04" transform="rotate(8)"/><circle r="2.76" fill="#fff"/><circle r="2.16" fill="#4285f4"/></svg>
<svg style="left:637.40px;top:511.20px" width="1" height="1"><circle r="3.1" fill="#1f6fc9"/></svg>
<svg style="left:635.90px;top:512.47px" width="1" height="1"><text transform="rotate(0.03)" font-size="3.6" fill="#fff" style="">M</text></svg>
<div class="abs" style="left:629.4px;top:526.2px;width:4.6px;height:1.1px;background:#8f9293;border-radius:1px"></div>
<svg style="left:789.40px;top:515.80px" width="1" height="1"><path d="M-2.2 1.1 L0 -1.1 L2.2 1.1" transform="scale(1.05)" fill="none" stroke="#e8e8e8" stroke-width="0.9" stroke-linecap="round" stroke-linejoin="round"/></svg>
<svg style="left:803.00px;top:516.00px" width="1" height="1"><path d="M-4.4 2.6 A2 2 0 0 1 -3.2 -1 A3 3 0 0 1 2.2 -1.6 A2.4 2.4 0 0 1 4.4 2.6 Z" fill="#ececec"/></svg>
<svg style="left:815.60px;top:518.72px" width="1" height="1"><text transform="rotate(0.03)" font-size="6.6" fill="#f0f0f0" style="letter-spacing:-0.351px;">ENG</text></svg>
<svg style="left:843.80px;top:516.20px" width="1" height="1"><path d="M-3.8 -0.8 Q0 -4 3.8 -0.8 M-2.4 0.8 Q0 -1.4 2.4 0.8" fill="none" stroke="#e8e8e8" stroke-width="0.85"/><circle cy="2.2" r="0.8" fill="#e8e8e8"/></svg>
<svg style="left:856.00px;top:516.00px" width="1" height="1"><path d="M-3.2 -1.2 H-1.8 L0.2 -3 V3 L-1.8 1.2 H-3.2 Z" fill="none" stroke="#e8e8e8" stroke-width="0.8" stroke-linejoin="round"/><path d="M1.6 -1.6 Q2.8 0 1.6 1.6" fill="none" stroke="#e8e8e8" stroke-width="0.8"/><path d="M3 -2.8 Q5 0 3 2.8" fill="none" stroke="#77797a" stroke-width="0.7"/></svg>
<svg style="left:871.00px;top:516.20px" width="1" height="1"><rect x="-4.6" y="-2.2" width="8.4" height="4.8" rx="0.9" fill="#e8e8e8"/><rect x="3.8" y="-0.8" width="1" height="2" fill="#e8e8e8"/><path d="M-3.4 -2 V-3.8 M-1.8 -2 V-3.8 M-4 -2 H-1.2" stroke="#e8e8e8" stroke-width="0.8"/></svg>
<svg style="left:890.00px;top:513.49px" width="1" height="1"><text transform="rotate(0.03)" font-size="6.5" fill="#f0f0f0" style="letter-spacing:-0.249px;">11:03 PM</text></svg>
<svg style="left:885.60px;top:522.89px" width="1" height="1"><text transform="rotate(0.03)" font-size="6.5" fill="#f0f0f0" style="letter-spacing:0.135px;">4/19/2025</text></svg>
<svg style="left:924.20px;top:515.60px" width="1" height="1"><circle r="4.3" fill="#c9cbcc"/></svg>
<svg style="left:922.80px;top:517.39px" width="1" height="1"><text transform="rotate(0.03)" font-size="4.8" fill="#333" style="">4</text></svg>
</div></body></html>
